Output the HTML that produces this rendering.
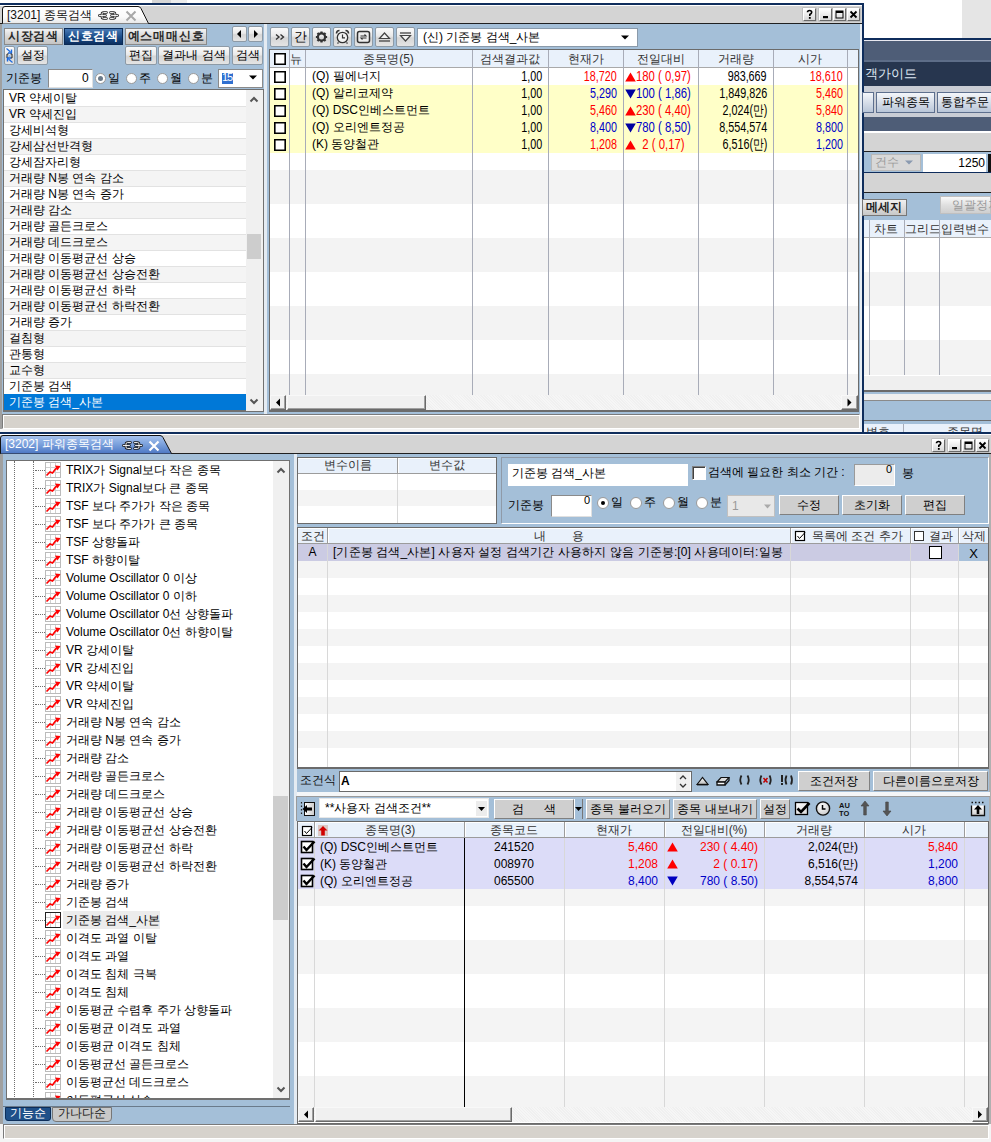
<!DOCTYPE html><html><head><meta charset='utf-8'><style>
*{margin:0;padding:0;box-sizing:border-box}
html,body{width:991px;height:1142px;overflow:hidden;background:#fff}
body{position:relative;font-family:"Liberation Sans",sans-serif;font-size:12px;color:#000}
body div{position:absolute}
.t{white-space:pre;font-size:12px}
.btn{background:linear-gradient(#fbfbfb,#e9e9e9 45%,#d6d6d6 55%,#e4e4e4);border:1px solid #8d9aa6;border-radius:2px}
.btn2{background:#cfcfcf;border:1px solid;border-color:#fff #808080 #808080 #fff}
.chk{background:#fff;border:1px solid #000}
</style></head><body>
<div style="left:152px;top:0px;width:19px;height:3px;background:#d6d6d6"></div>
<div style="left:171px;top:0px;width:16px;height:3px;background:#ececec"></div>
<div style="left:962px;top:0px;width:29px;height:38px;background:#e5e5e5"></div>
<div style="left:0px;top:3px;width:864px;height:2px;background:#0f2d5c"></div>
<div style="left:862px;top:3px;width:2px;height:429px;background:#0f2d5c"></div>
<div style="left:0px;top:5px;width:862px;height:1px;background:#fff"></div>
<div style="left:0px;top:6px;width:862px;height:18px;background:#d4d4d4"></div>
<div style="left:0px;top:23px;width:862px;height:1px;background:#202020"></div>
<svg style="position:absolute;left:0;top:5px" width="152" height="20"><defs><linearGradient id="tg1" x1="0" y1="0" x2="0" y2="1"><stop offset="0" stop-color="#ffffff"/><stop offset="0.6" stop-color="#fafafa"/><stop offset="1" stop-color="#e8e8e8"/></linearGradient></defs><path d="M2.5,18.5 L2.5,4 Q2.5,1.5 5,1.5 L138,1.5 Q140,1.5 141,3.5 L148.5,18.5" fill="url(#tg1)" stroke="#111" stroke-width="1"/></svg>
<div class="t" style="left:7px;top:6px;height:18px;line-height:18px;color:#111">[3201] 종목검색</div>
<svg style="position:absolute;left:98px;top:11px" width="21" height="10"><g fill="none" stroke="#222" stroke-width="2.6" stroke-linecap="round"><path d="M8.5 1.5 H5.5 Q4 1.5 4 3 V6 Q4 7.5 5.5 7.5 H8.5"/><path d="M1.2 4.5 H7.5"/><path d="M12.5 1.5 H15.5 Q17 1.5 17 3 V6 Q17 7.5 15.5 7.5 H12.5"/><path d="M13.5 4.5 H19.8"/></g><g fill="none" stroke="#fff" stroke-width="0.9" stroke-linecap="round"><path d="M8.5 1.5 H5.5 Q4 1.5 4 3 V6 Q4 7.5 5.5 7.5 H8.5"/><path d="M1.2 4.5 H7.5"/><path d="M12.5 1.5 H15.5 Q17 1.5 17 3 V6 Q17 7.5 15.5 7.5 H12.5"/><path d="M13.5 4.5 H19.8"/></g></svg>
<svg style="position:absolute;left:125px;top:10px" width="12" height="12"><path d="M1.5 1.5 L10.5 10.5 M10.5 1.5 L1.5 10.5" stroke="#a8a8a8" stroke-width="2"/></svg>
<div style="left:803px;top:8px;width:13px;height:13px;background:linear-gradient(#fff,#d8d8d8);border:1px solid;border-color:#fff #6a6a6a #6a6a6a #fff;box-shadow:0 0 0 0.5px #aaa"><svg width="13" height="13" style="position:absolute;left:-1px;top:-1px"><path d="M4.5 4.2 Q4.5 2.5 6.5 2.5 Q8.7 2.5 8.7 4.3 Q8.7 5.6 6.8 6.4 L6.8 8" stroke="#000" stroke-width="1.6" fill="none"/><rect x="5.9" y="9" width="1.8" height="1.8" fill="#000"/></svg></div>
<div style="left:819px;top:8px;width:13px;height:13px;background:linear-gradient(#fff,#d8d8d8);border:1px solid;border-color:#fff #6a6a6a #6a6a6a #fff;box-shadow:0 0 0 0.5px #aaa"><svg width="13" height="13" style="position:absolute;left:-1px;top:-1px"><rect x="4" y="8" width="5" height="2.2" fill="#000"/></svg></div>
<div style="left:833px;top:8px;width:13px;height:13px;background:linear-gradient(#fff,#d8d8d8);border:1px solid;border-color:#fff #6a6a6a #6a6a6a #fff;box-shadow:0 0 0 0.5px #aaa"><svg width="13" height="13" style="position:absolute;left:-1px;top:-1px"><rect x="3" y="3" width="7" height="7" fill="none" stroke="#000" stroke-width="1"/><rect x="3" y="3" width="7" height="2" fill="#000"/></svg></div>
<div style="left:847px;top:8px;width:13px;height:13px;background:linear-gradient(#fff,#d8d8d8);border:1px solid;border-color:#fff #6a6a6a #6a6a6a #fff;box-shadow:0 0 0 0.5px #aaa"><svg width="13" height="13" style="position:absolute;left:-1px;top:-1px"><path d="M3.5 3.5 L9.5 9.5 M9.5 3.5 L3.5 9.5" stroke="#000" stroke-width="1.8"/></svg></div>
<div style="left:0px;top:24px;width:2px;height:408px;background:#a0a0a0"></div>
<div style="left:2px;top:24px;width:858px;height:390px;background:#a4bfd8"></div>
<div style="left:860px;top:24px;width:2px;height:408px;background:#e8eef4"></div>
<div style="left:4px;top:28px;width:59px;height:17px;background:linear-gradient(#f4f4f4,#d8d8d8 50%,#c4c4c4);border:1px solid #8a8a8a;color:#2a2a2a;font-weight:bold;font-size:12px;line-height:15px;text-align:center;letter-spacing:0.8px">시장검색</div>
<div style="left:64px;top:28px;width:59px;height:17px;background:linear-gradient(#4a7ab5,#1c4f8c 50%,#0c2f60);border:1px solid #0a2a55;color:#fff;font-weight:bold;font-size:12px;line-height:15px;text-align:center;letter-spacing:0.8px">신호검색</div>
<div style="left:125px;top:28px;width:82px;height:17px;background:linear-gradient(#f4f4f4,#d8d8d8 50%,#c4c4c4);border:1px solid #8a8a8a;color:#2a2a2a;font-weight:bold;font-size:12px;line-height:15px;text-align:center;letter-spacing:0.8px">예스매매신호</div>
<div class="btn" style="left:232px;top:26px;width:15px;height:16px;"></div>
<div class="btn" style="left:248px;top:26px;width:15px;height:16px;"></div>
<svg style="position:absolute;left:232px;top:26px" width="15" height="16"><path d="M9 4 L5 8 L9 12 Z" fill="#000"/></svg>
<svg style="position:absolute;left:248px;top:26px" width="15" height="16"><path d="M6 4 L10 8 L6 12 Z" fill="#000"/></svg>
<div class="btn" style="left:4px;top:46px;width:11px;height:19px;"></div>
<svg style="position:absolute;left:4px;top:46px" width="11" height="19"><path d="M2.5 2.5 L6.5 6" stroke="#1a6ae0" stroke-width="1.2"/><path d="M7.5 3.5 V7 H4" fill="none" stroke="#1a6ae0" stroke-width="1.4"/><path d="M4.5 8 H3 V12 H4.5 M6.5 8 H8 V12 H6.5" fill="none" stroke="#222" stroke-width="1"/><path d="M4.5 10 H6.5" stroke="#4a9af0"/><path d="M8.5 16.5 L4.5 13" stroke="#1a6ae0" stroke-width="1.2"/><path d="M3.5 15.5 V12 H7" fill="none" stroke="#1a6ae0" stroke-width="1.4"/></svg>
<div class="btn" style="left:17px;top:46px;width:31px;height:19px;"></div>
<div class="t" style="left:17px;top:46px;height:19px;line-height:19px;width:31px;text-align:center;">설정</div>
<div class="btn" style="left:125px;top:46px;width:32px;height:19px;"></div>
<div class="t" style="left:125px;top:46px;height:19px;line-height:19px;width:32px;text-align:center;">편집</div>
<div class="btn" style="left:158px;top:46px;width:72px;height:19px;"></div>
<div class="t" style="left:158px;top:46px;height:19px;line-height:19px;width:72px;text-align:center;">결과내 검색</div>
<div class="btn" style="left:232px;top:46px;width:31px;height:19px;"></div>
<div class="t" style="left:232px;top:46px;height:19px;line-height:19px;width:31px;text-align:center;">검색</div>
<div class="t" style="left:6px;top:69px;height:18px;line-height:18px;">기준봉</div>
<div style="left:48px;top:69px;width:45px;height:19px;background:#fff;border:1px solid #8a8a8a;border-right-color:#e0e0e0;border-bottom-color:#e0e0e0"></div>
<div class="t" style="left:48px;top:69px;height:18px;line-height:18px;width:44px;text-align:right;">0 </div>
<div style="left:95px;top:73px;width:11px;height:11px;background:#fff;border:1px solid #9a9a9a;border-radius:50%"></div>
<div style="left:98px;top:76px;width:5px;height:5px;background:#6a7a8a;border-radius:50%"></div>
<div class="t" style="left:108px;top:69px;height:18px;line-height:18px;">일</div>
<div style="left:126px;top:73px;width:11px;height:11px;background:#fff;border:1px solid #9a9a9a;border-radius:50%"></div>
<div class="t" style="left:139px;top:69px;height:18px;line-height:18px;">주</div>
<div style="left:157px;top:73px;width:11px;height:11px;background:#fff;border:1px solid #9a9a9a;border-radius:50%"></div>
<div class="t" style="left:170px;top:69px;height:18px;line-height:18px;">월</div>
<div style="left:188px;top:73px;width:11px;height:11px;background:#fff;border:1px solid #9a9a9a;border-radius:50%"></div>
<div class="t" style="left:201px;top:69px;height:18px;line-height:18px;">분</div>
<div style="left:218px;top:69px;width:45px;height:19px;background:#fff;border:1px solid #8a8a8a"></div>
<div style="left:222px;top:73px;width:11px;height:11px;background:#3070d0"></div>
<div class="t" style="left:222px;top:71px;height:13px;line-height:13px;color:#fff;font-size:11px;letter-spacing:-1px">15</div>
<svg style="position:absolute;left:248px;top:75px" width="10" height="6"><path d="M1 0.5 L9 0.5 L5 4.5 Z" fill="#000"/></svg>
<div style="left:3px;top:89px;width:261px;height:323px;background:#fff;border:1px solid #707070;border-right-width:2px;border-bottom-width:2px"></div>
<div style="left:4px;top:90px;width:242px;height:16px;background:#ffffff"></div>
<div class="t" style="left:9px;top:90px;height:16px;line-height:16px;">VR 약세이탈</div>
<div style="left:4px;top:106px;width:242px;height:16px;background:#f4f4f4;border-top:1px solid #e2e2e2"></div>
<div class="t" style="left:9px;top:106px;height:16px;line-height:16px;">VR 약세진입</div>
<div style="left:4px;top:122px;width:242px;height:16px;background:#ffffff;border-top:1px solid #e2e2e2"></div>
<div class="t" style="left:9px;top:122px;height:16px;line-height:16px;">강세비석형</div>
<div style="left:4px;top:138px;width:242px;height:16px;background:#f4f4f4;border-top:1px solid #e2e2e2"></div>
<div class="t" style="left:9px;top:138px;height:16px;line-height:16px;">강세삼선반격형</div>
<div style="left:4px;top:154px;width:242px;height:16px;background:#ffffff;border-top:1px solid #e2e2e2"></div>
<div class="t" style="left:9px;top:154px;height:16px;line-height:16px;">강세잠자리형</div>
<div style="left:4px;top:170px;width:242px;height:16px;background:#f4f4f4;border-top:1px solid #e2e2e2"></div>
<div class="t" style="left:9px;top:170px;height:16px;line-height:16px;">거래량 N봉 연속 감소</div>
<div style="left:4px;top:186px;width:242px;height:16px;background:#ffffff;border-top:1px solid #e2e2e2"></div>
<div class="t" style="left:9px;top:186px;height:16px;line-height:16px;">거래량 N봉 연속 증가</div>
<div style="left:4px;top:202px;width:242px;height:16px;background:#f4f4f4;border-top:1px solid #e2e2e2"></div>
<div class="t" style="left:9px;top:202px;height:16px;line-height:16px;">거래량 감소</div>
<div style="left:4px;top:218px;width:242px;height:16px;background:#ffffff;border-top:1px solid #e2e2e2"></div>
<div class="t" style="left:9px;top:218px;height:16px;line-height:16px;">거래량 골든크로스</div>
<div style="left:4px;top:234px;width:242px;height:16px;background:#f4f4f4;border-top:1px solid #e2e2e2"></div>
<div class="t" style="left:9px;top:234px;height:16px;line-height:16px;">거래량 데드크로스</div>
<div style="left:4px;top:250px;width:242px;height:16px;background:#ffffff;border-top:1px solid #e2e2e2"></div>
<div class="t" style="left:9px;top:250px;height:16px;line-height:16px;">거래량 이동평균선 상승</div>
<div style="left:4px;top:266px;width:242px;height:16px;background:#f4f4f4;border-top:1px solid #e2e2e2"></div>
<div class="t" style="left:9px;top:266px;height:16px;line-height:16px;">거래량 이동평균선 상승전환</div>
<div style="left:4px;top:282px;width:242px;height:16px;background:#ffffff;border-top:1px solid #e2e2e2"></div>
<div class="t" style="left:9px;top:282px;height:16px;line-height:16px;">거래량 이동평균선 하락</div>
<div style="left:4px;top:298px;width:242px;height:16px;background:#f4f4f4;border-top:1px solid #e2e2e2"></div>
<div class="t" style="left:9px;top:298px;height:16px;line-height:16px;">거래량 이동평균선 하락전환</div>
<div style="left:4px;top:314px;width:242px;height:16px;background:#ffffff;border-top:1px solid #e2e2e2"></div>
<div class="t" style="left:9px;top:314px;height:16px;line-height:16px;">거래량 증가</div>
<div style="left:4px;top:330px;width:242px;height:16px;background:#f4f4f4;border-top:1px solid #e2e2e2"></div>
<div class="t" style="left:9px;top:330px;height:16px;line-height:16px;">걸침형</div>
<div style="left:4px;top:346px;width:242px;height:16px;background:#ffffff;border-top:1px solid #e2e2e2"></div>
<div class="t" style="left:9px;top:346px;height:16px;line-height:16px;">관통형</div>
<div style="left:4px;top:362px;width:242px;height:16px;background:#f4f4f4;border-top:1px solid #e2e2e2"></div>
<div class="t" style="left:9px;top:362px;height:16px;line-height:16px;">교수형</div>
<div style="left:4px;top:378px;width:242px;height:16px;background:#ffffff;border-top:1px solid #e2e2e2"></div>
<div class="t" style="left:9px;top:378px;height:16px;line-height:16px;">기준봉 검색</div>
<div style="left:4px;top:394px;width:242px;height:16px;background:#0078d7"></div>
<div class="t" style="left:9px;top:394px;height:16px;line-height:16px;color:#fff">기준봉 검색_사본</div>
<div style="left:246px;top:90px;width:17px;height:321px;background:#f0f0f0"></div>
<div style="left:247px;top:234px;width:14px;height:25px;background:#cdcdcd"></div>
<svg style="position:absolute;left:249px;top:95px" width="10" height="8"><path d="M1.5 6.5 L5 3 L8.5 6.5" stroke="#555" stroke-width="2" fill="none"/></svg>
<svg style="position:absolute;left:249px;top:398px" width="10" height="8"><path d="M1.5 1.5 L5 5 L8.5 1.5" stroke="#555" stroke-width="2" fill="none"/></svg>
<div style="left:264px;top:24px;width:3px;height:390px;background:#e4ebf2"></div>
<div class="btn" style="left:270px;top:27px;width:19px;height:20px;"></div>
<div class="btn" style="left:291px;top:27px;width:19px;height:20px;"></div>
<div class="btn" style="left:312px;top:27px;width:19px;height:20px;"></div>
<div class="btn" style="left:333px;top:27px;width:19px;height:20px;"></div>
<div class="btn" style="left:354px;top:27px;width:19px;height:20px;"></div>
<div class="btn" style="left:375px;top:27px;width:19px;height:20px;"></div>
<div class="btn" style="left:396px;top:27px;width:19px;height:20px;"></div>
<svg style="position:absolute;left:270px;top:27px" width="19" height="20"><path d="M6 7.5 L9 10 L6 12.5 M10.5 7.5 L13.5 10 L10.5 12.5" stroke="#333" stroke-width="1.4" fill="none"/></svg>
<div class="t" style="left:294px;top:27px;height:20px;line-height:20px;font-size:13px">간</div>
<svg style="position:absolute;left:312px;top:27px" width="19" height="20"><g transform="translate(9.5,10)"><circle r="3.6" fill="none" stroke="#333" stroke-width="2.2"/><g stroke="#333" stroke-width="2.2"><path d="M0 -5.6 V-3.5 M0 5.6 V3.5 M-5.6 0 H-3.5 M5.6 0 H3.5 M-4 -4 L-2.6 -2.6 M4 4 L2.6 2.6 M-4 4 L-2.6 2.6 M4 -4 L2.6 -2.6"/></g></g></svg>
<svg style="position:absolute;left:333px;top:27px" width="19" height="20"><circle cx="9.5" cy="10.5" r="5.2" fill="#f4f4f4" stroke="#333" stroke-width="1.3"/><path d="M9.5 7.5 V10.8 H12" stroke="#333" stroke-width="1.2" fill="none"/><path d="M3.5 6.5 Q3.5 3.5 6.5 3.5" stroke="#333" stroke-width="1.6" fill="none"/><path d="M15.5 6.5 Q15.5 3.5 12.5 3.5" stroke="#333" stroke-width="1.6" fill="none"/><path d="M5.5 15.5 L4.5 16.5 M13.5 15.5 L14.5 16.5" stroke="#333" stroke-width="1.2"/></svg>
<svg style="position:absolute;left:354px;top:27px" width="19" height="20"><rect x="3.5" y="4.5" width="12" height="11" rx="2" fill="#eee" stroke="#333" stroke-width="1.5"/><path d="M6.5 9 H12 L10.5 7.5 M12.5 11 H7 L8.5 12.5" stroke="#333" stroke-width="1.1" fill="none"/></svg>
<svg style="position:absolute;left:375px;top:27px" width="19" height="20"><path d="M4.5 11.5 L9.5 6 L14.5 11.5 Z" fill="#f4f4f4" stroke="#444" stroke-width="1.2"/><path d="M4 14 H15" stroke="#444" stroke-width="1.3"/></svg>
<svg style="position:absolute;left:396px;top:27px" width="19" height="20"><path d="M4 6 H15" stroke="#444" stroke-width="1.3"/><path d="M4.5 8.5 L9.5 14 L14.5 8.5 Z" fill="#f4f4f4" stroke="#444" stroke-width="1.2"/></svg>
<div style="left:417px;top:28px;width:221px;height:19px;background:#fff;border:1px solid #8a9aaa"></div>
<div class="t" style="left:423px;top:28px;height:18px;line-height:18px;">(신) 기준봉 검색_사본</div>
<svg style="position:absolute;left:620px;top:35px" width="10" height="6"><path d="M1 0.5 L9 0.5 L5 4.5 Z" fill="#000"/></svg>
<div style="left:269px;top:49px;width:590px;height:363px;background:#fff;border:1px solid #6b6b6b;border-bottom-width:2px"></div>
<div style="left:270px;top:50px;width:588px;height:18px;background:#e9f1fb;border-bottom:1px solid #a9a9a9"></div>
<div style="left:270px;top:68px;width:588px;height:17px;background:#ffffff"></div>
<div style="left:270px;top:85px;width:588px;height:17px;background:#ffffc8"></div>
<div style="left:270px;top:102px;width:588px;height:17px;background:#ffffc8"></div>
<div style="left:270px;top:119px;width:588px;height:17px;background:#ffffc8"></div>
<div style="left:270px;top:136px;width:588px;height:17px;background:#ffffc8"></div>
<div style="left:270px;top:153px;width:588px;height:17px;background:#ffffff"></div>
<div style="left:270px;top:170px;width:588px;height:17px;background:#f3f3f3"></div>
<div style="left:270px;top:187px;width:588px;height:17px;background:#f3f3f3"></div>
<div style="left:270px;top:204px;width:588px;height:17px;background:#ffffff"></div>
<div style="left:270px;top:221px;width:588px;height:17px;background:#ffffff"></div>
<div style="left:270px;top:238px;width:588px;height:17px;background:#f3f3f3"></div>
<div style="left:270px;top:255px;width:588px;height:17px;background:#f3f3f3"></div>
<div style="left:270px;top:272px;width:588px;height:17px;background:#ffffff"></div>
<div style="left:270px;top:289px;width:588px;height:17px;background:#ffffff"></div>
<div style="left:270px;top:306px;width:588px;height:17px;background:#f3f3f3"></div>
<div style="left:270px;top:323px;width:588px;height:17px;background:#f3f3f3"></div>
<div style="left:270px;top:340px;width:588px;height:17px;background:#ffffff"></div>
<div style="left:270px;top:357px;width:588px;height:17px;background:#ffffff"></div>
<div style="left:270px;top:374px;width:588px;height:17px;background:#f3f3f3"></div>
<div style="left:270px;top:391px;width:588px;height:4px;background:#f3f3f3"></div>
<div style="left:289px;top:50px;width:1px;height:345px;background:#a8acb8"></div>
<div style="left:305px;top:50px;width:1px;height:345px;background:#a8acb8"></div>
<div style="left:472px;top:50px;width:1px;height:345px;background:#a8acb8"></div>
<div style="left:548px;top:50px;width:1px;height:345px;background:#a8acb8"></div>
<div style="left:623px;top:50px;width:1px;height:345px;background:#a8acb8"></div>
<div style="left:698px;top:50px;width:1px;height:345px;background:#a8acb8"></div>
<div style="left:773px;top:50px;width:1px;height:345px;background:#a8acb8"></div>
<div style="left:847px;top:50px;width:1px;height:345px;background:#a8acb8"></div>
<div style="left:274px;top:53px;width:12px;height:12px;background:#fff;border:1px solid #000;box-shadow:inset 0 0 0 0.6px #000"></div>
<div class="t" style="left:290px;top:50px;height:18px;line-height:18px;color:#333">뉴</div>
<div class="t" style="left:305px;top:50px;height:18px;line-height:18px;width:167px;text-align:center;color:#333">종목명(5)</div>
<div class="t" style="left:472px;top:50px;height:18px;line-height:18px;width:76px;text-align:center;color:#333">검색결과값</div>
<div class="t" style="left:548px;top:50px;height:18px;line-height:18px;width:75px;text-align:center;color:#333">현재가</div>
<div class="t" style="left:623px;top:50px;height:18px;line-height:18px;width:75px;text-align:center;color:#333">전일대비</div>
<div class="t" style="left:698px;top:50px;height:18px;line-height:18px;width:75px;text-align:center;color:#333">거래량</div>
<div class="t" style="left:773px;top:50px;height:18px;line-height:18px;width:74px;text-align:center;color:#333">시가</div>
<div style="left:274px;top:71px;width:12px;height:12px;background:#fff;border:1px solid #000;box-shadow:inset 0 0 0 0.6px #000"></div>
<div class="t" style="left:312px;top:68px;height:17px;line-height:17px;">(Q) 필에너지</div>
<div class="t" style="left:392px;top:68px;width:150px;height:17px;line-height:17px;text-align:right;color:#000"><span style="display:inline-block;font-size:14px;transform:scaleX(0.77);transform-origin:100% 50%">1,00</span></div>
<div class="t" style="left:467px;top:68px;width:150px;height:17px;line-height:17px;text-align:right;color:#ff0000"><span style="display:inline-block;font-size:14px;transform:scaleX(0.77);transform-origin:100% 50%">18,720</span></div>
<svg style="position:absolute;left:625px;top:72px" width="11" height="10"><path d="M5.5 0.5 L10.8 9.5 L0.2 9.5 Z" fill="#ff0000"/></svg>
<div class="t" style="left:636px;top:68px;height:17px;line-height:17px;color:#ff0000"><span style="display:inline-block;font-size:14px;transform:scaleX(0.81);transform-origin:0 50%">180 ( 0,97)</span></div>
<div class="t" style="left:617px;top:68px;width:150px;height:17px;line-height:17px;text-align:right;color:#000"><span style="display:inline-block;font-size:14px;transform:scaleX(0.77);transform-origin:100% 50%">983,669</span></div>
<div class="t" style="left:693px;top:68px;width:150px;height:17px;line-height:17px;text-align:right;color:#ff0000"><span style="display:inline-block;font-size:14px;transform:scaleX(0.77);transform-origin:100% 50%">18,610</span></div>
<div style="left:274px;top:88px;width:12px;height:12px;background:#fff;border:1px solid #000;box-shadow:inset 0 0 0 0.6px #000"></div>
<div class="t" style="left:312px;top:85px;height:17px;line-height:17px;">(Q) 알리코제약</div>
<div class="t" style="left:392px;top:85px;width:150px;height:17px;line-height:17px;text-align:right;color:#000"><span style="display:inline-block;font-size:14px;transform:scaleX(0.77);transform-origin:100% 50%">1,00</span></div>
<div class="t" style="left:467px;top:85px;width:150px;height:17px;line-height:17px;text-align:right;color:#0000c8"><span style="display:inline-block;font-size:14px;transform:scaleX(0.77);transform-origin:100% 50%">5,290</span></div>
<svg style="position:absolute;left:625px;top:89px" width="11" height="10"><path d="M0.2 0.5 L10.8 0.5 L5.5 9.5 Z" fill="#0000a0"/></svg>
<div class="t" style="left:636px;top:85px;height:17px;line-height:17px;color:#0000c8"><span style="display:inline-block;font-size:14px;transform:scaleX(0.81);transform-origin:0 50%">100 ( 1,86)</span></div>
<div class="t" style="left:617px;top:85px;width:150px;height:17px;line-height:17px;text-align:right;color:#000"><span style="display:inline-block;font-size:14px;transform:scaleX(0.77);transform-origin:100% 50%">1,849,826</span></div>
<div class="t" style="left:693px;top:85px;width:150px;height:17px;line-height:17px;text-align:right;color:#ff0000"><span style="display:inline-block;font-size:14px;transform:scaleX(0.77);transform-origin:100% 50%">5,460</span></div>
<div style="left:274px;top:105px;width:12px;height:12px;background:#fff;border:1px solid #000;box-shadow:inset 0 0 0 0.6px #000"></div>
<div class="t" style="left:312px;top:102px;height:17px;line-height:17px;">(Q) DSC인베스트먼트</div>
<div class="t" style="left:392px;top:102px;width:150px;height:17px;line-height:17px;text-align:right;color:#000"><span style="display:inline-block;font-size:14px;transform:scaleX(0.77);transform-origin:100% 50%">1,00</span></div>
<div class="t" style="left:467px;top:102px;width:150px;height:17px;line-height:17px;text-align:right;color:#ff0000"><span style="display:inline-block;font-size:14px;transform:scaleX(0.77);transform-origin:100% 50%">5,460</span></div>
<svg style="position:absolute;left:625px;top:106px" width="11" height="10"><path d="M5.5 0.5 L10.8 9.5 L0.2 9.5 Z" fill="#ff0000"/></svg>
<div class="t" style="left:636px;top:102px;height:17px;line-height:17px;color:#ff0000"><span style="display:inline-block;font-size:14px;transform:scaleX(0.81);transform-origin:0 50%">230 ( 4,40)</span></div>
<div class="t" style="left:617px;top:102px;width:150px;height:17px;line-height:17px;text-align:right;color:#000"><span style="display:inline-block;font-size:14px;transform:scaleX(0.77);transform-origin:100% 50%">2,024(만)</span></div>
<div class="t" style="left:693px;top:102px;width:150px;height:17px;line-height:17px;text-align:right;color:#ff0000"><span style="display:inline-block;font-size:14px;transform:scaleX(0.77);transform-origin:100% 50%">5,840</span></div>
<div style="left:274px;top:122px;width:12px;height:12px;background:#fff;border:1px solid #000;box-shadow:inset 0 0 0 0.6px #000"></div>
<div class="t" style="left:312px;top:119px;height:17px;line-height:17px;">(Q) 오리엔트정공</div>
<div class="t" style="left:392px;top:119px;width:150px;height:17px;line-height:17px;text-align:right;color:#000"><span style="display:inline-block;font-size:14px;transform:scaleX(0.77);transform-origin:100% 50%">1,00</span></div>
<div class="t" style="left:467px;top:119px;width:150px;height:17px;line-height:17px;text-align:right;color:#0000c8"><span style="display:inline-block;font-size:14px;transform:scaleX(0.77);transform-origin:100% 50%">8,400</span></div>
<svg style="position:absolute;left:625px;top:123px" width="11" height="10"><path d="M0.2 0.5 L10.8 0.5 L5.5 9.5 Z" fill="#0000a0"/></svg>
<div class="t" style="left:636px;top:119px;height:17px;line-height:17px;color:#0000c8"><span style="display:inline-block;font-size:14px;transform:scaleX(0.81);transform-origin:0 50%">780 ( 8,50)</span></div>
<div class="t" style="left:617px;top:119px;width:150px;height:17px;line-height:17px;text-align:right;color:#000"><span style="display:inline-block;font-size:14px;transform:scaleX(0.77);transform-origin:100% 50%">8,554,574</span></div>
<div class="t" style="left:693px;top:119px;width:150px;height:17px;line-height:17px;text-align:right;color:#0000c8"><span style="display:inline-block;font-size:14px;transform:scaleX(0.77);transform-origin:100% 50%">8,800</span></div>
<div style="left:274px;top:139px;width:12px;height:12px;background:#fff;border:1px solid #000;box-shadow:inset 0 0 0 0.6px #000"></div>
<div class="t" style="left:312px;top:136px;height:17px;line-height:17px;">(K) 동양철관</div>
<div class="t" style="left:392px;top:136px;width:150px;height:17px;line-height:17px;text-align:right;color:#000"><span style="display:inline-block;font-size:14px;transform:scaleX(0.77);transform-origin:100% 50%">1,00</span></div>
<div class="t" style="left:467px;top:136px;width:150px;height:17px;line-height:17px;text-align:right;color:#ff0000"><span style="display:inline-block;font-size:14px;transform:scaleX(0.77);transform-origin:100% 50%">1,208</span></div>
<svg style="position:absolute;left:625px;top:140px" width="11" height="10"><path d="M5.5 0.5 L10.8 9.5 L0.2 9.5 Z" fill="#ff0000"/></svg>
<div class="t" style="left:636px;top:136px;height:17px;line-height:17px;color:#ff0000"><span style="display:inline-block;font-size:14px;transform:scaleX(0.81);transform-origin:0 50%">  2 ( 0,17)</span></div>
<div class="t" style="left:617px;top:136px;width:150px;height:17px;line-height:17px;text-align:right;color:#000"><span style="display:inline-block;font-size:14px;transform:scaleX(0.77);transform-origin:100% 50%">6,516(만)</span></div>
<div class="t" style="left:693px;top:136px;width:150px;height:17px;line-height:17px;text-align:right;color:#0000c8"><span style="display:inline-block;font-size:14px;transform:scaleX(0.77);transform-origin:100% 50%">1,200</span></div>
<div style="left:270px;top:395px;width:588px;height:15px;background:repeating-linear-gradient(45deg,#f6f6f6 0 1px,#f0f0f0 1px 2px)"></div>
<div style="left:270px;top:395px;width:16px;height:15px;background:#f0f0f0;border:1px solid;border-color:#f8f8f8 #6a6a6a #6a6a6a #f8f8f8;box-shadow:inset -1px -1px 0 #a0a0a0"></div>
<svg style="position:absolute;left:270px;top:395px" width="16" height="15"><path d="M10.0 3.5 L6.0 7.5 L10.0 11.5 Z" fill="#000"/></svg>
<div style="left:287px;top:395px;width:139px;height:15px;background:#f0f0f0;border:1px solid;border-color:#f8f8f8 #6a6a6a #6a6a6a #f8f8f8;box-shadow:inset -1px -1px 0 #a0a0a0"></div>
<div style="left:841px;top:395px;width:17px;height:15px;background:#f0f0f0;border:1px solid;border-color:#f8f8f8 #6a6a6a #6a6a6a #f8f8f8;box-shadow:inset -1px -1px 0 #a0a0a0"></div>
<svg style="position:absolute;left:841px;top:395px" width="17" height="15"><path d="M6.5 3.5 L10.5 7.5 L6.5 11.5 Z" fill="#000"/></svg>
<div style="left:0px;top:429px;width:862px;height:3px;background:#f4f4f4"></div>
<div style="left:2px;top:414px;width:858px;height:15px;background:#d6d2cc;border:1px solid #7a7a7a;border-right-color:#fff;border-bottom-color:#fff;box-shadow:inset 1px 1px 0 #fff"></div>
<div style="left:864px;top:38px;width:127px;height:2px;background:#0f2d5c"></div>
<div style="left:864px;top:40px;width:127px;height:1px;background:#e8e8f0"></div>
<div style="left:864px;top:41px;width:127px;height:21px;background:#4e5d77"></div>
<div style="left:864px;top:60px;width:127px;height:2px;background:#5d6d88"></div>
<div style="left:864px;top:62px;width:127px;height:24px;background:#27364f"></div>
<div class="t" style="left:865px;top:65px;height:18px;line-height:18px;color:#dfe8f4;font-size:13px">객가이드</div>
<div style="left:864px;top:86px;width:127px;height:31px;background:#c9cdd5"></div>
<div style="left:862px;top:92px;width:12px;height:21px;background:linear-gradient(#f4f6fa,#b9c6d8);border:1px solid #5d6f8e"></div>
<div style="left:876px;top:92px;width:59px;height:21px;background:linear-gradient(#f4f6fa,#b9c6d8);border:1px solid #5d6f8e"></div>
<div class="t" style="left:876px;top:92px;height:21px;line-height:21px;width:59px;text-align:center;">파워종목</div>
<div style="left:937px;top:92px;width:60px;height:21px;background:linear-gradient(#f4f6fa,#b9c6d8);border:1px solid #5d6f8e"></div>
<div class="t" style="left:941px;top:92px;height:21px;line-height:21px;">통합주문</div>
<div style="left:864px;top:117px;width:127px;height:14px;background:#4e5d77"></div>
<div style="left:864px;top:131px;width:127px;height:2px;background:#fff"></div>
<div style="left:864px;top:133px;width:127px;height:18px;background:#d4d4d4"></div>
<div style="left:864px;top:151px;width:127px;height:1px;background:#222"></div>
<div style="left:864px;top:152px;width:127px;height:20px;background:#a4bfd8"></div>
<div style="left:871px;top:154px;width:50px;height:17px;background:#d8d8d8;border:1px solid #b8b8b8"></div>
<div class="t" style="left:875px;top:154px;height:17px;line-height:17px;color:#9a9a9a">건수</div>
<svg style="position:absolute;left:904px;top:160px" width="10" height="6"><path d="M1 0.5 L9 0.5 L5 4.5 Z" fill="#8a9ab0"/></svg>
<div style="left:923px;top:154px;width:63px;height:18px;background:#fff"></div>
<div class="t" style="left:923px;top:154px;height:18px;line-height:18px;width:62px;text-align:right;">1250</div>
<div style="left:988px;top:154px;width:3px;height:18px;background:#111"></div>
<div style="left:864px;top:172px;width:127px;height:1px;background:#0f2d5c"></div>
<div style="left:864px;top:173px;width:127px;height:19px;background:#d4d4d4"></div>
<div style="left:864px;top:192px;width:127px;height:1px;background:#222"></div>
<div style="left:864px;top:193px;width:127px;height:28px;background:#a4bfd8"></div>
<div style="left:862px;top:199px;width:45px;height:17px;background:linear-gradient(#f0f0f0,#c8c8c8);border:1px solid #777"></div>
<div class="t" style="left:866px;top:199px;height:17px;line-height:17px;font-weight:bold;color:#222">메세지</div>
<div style="left:940px;top:196px;width:51px;height:18px;background:linear-gradient(#fafafa,#e0e0e0 50%,#cfcfcf);border:1px solid #c0c0c0"></div>
<div class="t" style="left:952px;top:196px;height:18px;line-height:18px;color:#999">일괄정지</div>
<div style="left:864px;top:220px;width:127px;height:18px;background:#e9f1fb;border-bottom:1px solid #a9a9a9"></div>
<div class="t" style="left:874px;top:220px;height:18px;line-height:18px;color:#333">차트</div>
<div class="t" style="left:905px;top:220px;height:18px;line-height:18px;color:#333">그리드</div>
<div class="t" style="left:941px;top:220px;height:18px;line-height:18px;color:#333">입력변수</div>
<div style="left:864px;top:238px;width:127px;height:34px;background:#fff"></div>
<div style="left:864px;top:272px;width:127px;height:34px;background:#f3f3f3"></div>
<div style="left:864px;top:306px;width:127px;height:34px;background:#fff"></div>
<div style="left:864px;top:340px;width:127px;height:35px;background:#f3f3f3"></div>
<div style="left:869px;top:220px;width:1px;height:155px;background:#a8acb8"></div>
<div style="left:904px;top:220px;width:1px;height:155px;background:#a8acb8"></div>
<div style="left:939px;top:220px;width:1px;height:155px;background:#a8acb8"></div>
<div style="left:864px;top:375px;width:127px;height:1px;background:#fff"></div>
<div style="left:864px;top:376px;width:127px;height:14px;background:#efefef"></div>
<div style="left:864px;top:390px;width:127px;height:2px;background:#6a6a6a"></div>
<div style="left:864px;top:392px;width:127px;height:2px;background:#a4bfd8"></div>
<div style="left:864px;top:394px;width:127px;height:6px;background:#efefef"></div>
<div style="left:864px;top:400px;width:127px;height:1px;background:#8a8a8a"></div>
<div style="left:864px;top:401px;width:127px;height:19px;background:#a4bfd8"></div>
<div style="left:864px;top:420px;width:127px;height:1px;background:#6a6a6a"></div>
<div style="left:864px;top:421px;width:127px;height:3px;background:#a4bfd8"></div>
<div style="left:864px;top:424px;width:127px;height:8px;background:#e9f1fb"></div>
<div style="left:903px;top:424px;width:1px;height:8px;background:#a8acb8"></div>
<div class="t" style="left:866px;top:424px;height:16px;line-height:16px;color:#333">변호</div>
<div class="t" style="left:947px;top:424px;height:16px;line-height:16px;color:#333">종목명</div>
<div style="left:0px;top:432px;width:991px;height:2px;background:#0f2d5c"></div>
<div style="left:0px;top:434px;width:991px;height:1px;background:#fff"></div>
<div style="left:0px;top:435px;width:991px;height:18px;background:#d4d4d4"></div>
<div style="left:0px;top:453px;width:991px;height:1px;background:#202020"></div>
<svg style="position:absolute;left:0;top:434px" width="180" height="21"><defs><linearGradient id="tg2" x1="0" y1="0" x2="0" y2="1"><stop offset="0" stop-color="#a8c4ee"/><stop offset="0.5" stop-color="#7aa0dc"/><stop offset="1" stop-color="#4d78c4"/></linearGradient></defs><path d="M0.5,19.5 L0.5,4 Q0.5,1.5 3,1.5 L160,1.5 Q162,1.5 163,3.5 L171.5,19.5" fill="url(#tg2)" stroke="#111" stroke-width="1"/></svg>
<div class="t" style="left:5px;top:435px;height:18px;line-height:18px;color:#fff">[3202] 파워종목검색</div>
<svg style="position:absolute;left:122px;top:441px" width="21" height="10"><g fill="none" stroke="#1a1a1a" stroke-width="2.6" stroke-linecap="round"><path d="M8.5 1.5 H5.5 Q4 1.5 4 3 V6 Q4 7.5 5.5 7.5 H8.5"/><path d="M1.2 4.5 H7.5"/><path d="M12.5 1.5 H15.5 Q17 1.5 17 3 V6 Q17 7.5 15.5 7.5 H12.5"/><path d="M13.5 4.5 H19.8"/></g><g fill="none" stroke="#fff" stroke-width="0.9" stroke-linecap="round"><path d="M8.5 1.5 H5.5 Q4 1.5 4 3 V6 Q4 7.5 5.5 7.5 H8.5"/><path d="M1.2 4.5 H7.5"/><path d="M12.5 1.5 H15.5 Q17 1.5 17 3 V6 Q17 7.5 15.5 7.5 H12.5"/><path d="M13.5 4.5 H19.8"/></g></svg>
<svg style="position:absolute;left:148px;top:440px" width="12" height="12"><path d="M1.5 1.5 L10.5 10.5 M10.5 1.5 L1.5 10.5" stroke="#fff" stroke-width="2.2"/></svg>
<div style="left:932px;top:439px;width:13px;height:13px;background:linear-gradient(#fff,#d8d8d8);border:1px solid;border-color:#fff #6a6a6a #6a6a6a #fff;box-shadow:0 0 0 0.5px #aaa"><svg width="13" height="13" style="position:absolute;left:-1px;top:-1px"><path d="M4.5 4.2 Q4.5 2.5 6.5 2.5 Q8.7 2.5 8.7 4.3 Q8.7 5.6 6.8 6.4 L6.8 8" stroke="#000" stroke-width="1.6" fill="none"/><rect x="5.9" y="9" width="1.8" height="1.8" fill="#000"/></svg></div>
<div style="left:948px;top:439px;width:13px;height:13px;background:linear-gradient(#fff,#d8d8d8);border:1px solid;border-color:#fff #6a6a6a #6a6a6a #fff;box-shadow:0 0 0 0.5px #aaa"><svg width="13" height="13" style="position:absolute;left:-1px;top:-1px"><rect x="4" y="8" width="5" height="2.2" fill="#000"/></svg></div>
<div style="left:962px;top:439px;width:13px;height:13px;background:linear-gradient(#fff,#d8d8d8);border:1px solid;border-color:#fff #6a6a6a #6a6a6a #fff;box-shadow:0 0 0 0.5px #aaa"><svg width="13" height="13" style="position:absolute;left:-1px;top:-1px"><rect x="3" y="3" width="7" height="7" fill="none" stroke="#000" stroke-width="1"/><rect x="3" y="3" width="7" height="2" fill="#000"/></svg></div>
<div style="left:976px;top:439px;width:13px;height:13px;background:linear-gradient(#fff,#d8d8d8);border:1px solid;border-color:#fff #6a6a6a #6a6a6a #fff;box-shadow:0 0 0 0.5px #aaa"><svg width="13" height="13" style="position:absolute;left:-1px;top:-1px"><path d="M3.5 3.5 L9.5 9.5 M9.5 3.5 L3.5 9.5" stroke="#000" stroke-width="1.8"/></svg></div>
<div style="left:0px;top:454px;width:3px;height:688px;background:#a0a0a0"></div>
<div style="left:3px;top:454px;width:986px;height:670px;background:#a4bfd8"></div>
<div style="left:989px;top:454px;width:2px;height:688px;background:#b0b0b0"></div>
<div style="left:6px;top:460px;width:284px;height:640px;background:#fff;border:1px solid #707070"></div>
<div style="left:14px;top:461px;width:1px;height:638px;border-left:1px dotted #707070"></div>
<div style="left:33px;top:461px;width:1px;height:638px;border-left:1px dotted #707070"></div>
<div style="left:35px;top:470px;width:10px;height:1px;border-top:1px dotted #707070"></div>
<div style="left:45px;top:462px;width:16px;height:16px;"><svg width="16" height="16" style="position:absolute;left:0;top:0"><rect x="0.5" y="0.5" width="15" height="15" fill="#fff" stroke="#bbb"/><path d="M5.5 1V15M10.5 1V15M1 5.5H15M1 10.5H15" stroke="#d0d0d0"/><path d="M1.5 13.5 L5 10 L7.5 11 L10.5 7 L12 6.5" stroke="#f00" stroke-width="1.6" fill="none"/><path d="M10 3.5 L15.5 4 L12.5 8.5 Z" fill="#f00"/></svg></div>
<div class="t" style="left:66px;top:461px;height:18px;line-height:18px;">TRIX가 Signal보다 작은 종목</div>
<div style="left:35px;top:488px;width:10px;height:1px;border-top:1px dotted #707070"></div>
<div style="left:45px;top:480px;width:16px;height:16px;"><svg width="16" height="16" style="position:absolute;left:0;top:0"><rect x="0.5" y="0.5" width="15" height="15" fill="#fff" stroke="#bbb"/><path d="M5.5 1V15M10.5 1V15M1 5.5H15M1 10.5H15" stroke="#d0d0d0"/><path d="M1.5 13.5 L5 10 L7.5 11 L10.5 7 L12 6.5" stroke="#f00" stroke-width="1.6" fill="none"/><path d="M10 3.5 L15.5 4 L12.5 8.5 Z" fill="#f00"/></svg></div>
<div class="t" style="left:66px;top:479px;height:18px;line-height:18px;">TRIX가 Signal보다 큰 종목</div>
<div style="left:35px;top:506px;width:10px;height:1px;border-top:1px dotted #707070"></div>
<div style="left:45px;top:498px;width:16px;height:16px;"><svg width="16" height="16" style="position:absolute;left:0;top:0"><rect x="0.5" y="0.5" width="15" height="15" fill="#fff" stroke="#bbb"/><path d="M5.5 1V15M10.5 1V15M1 5.5H15M1 10.5H15" stroke="#d0d0d0"/><path d="M1.5 13.5 L5 10 L7.5 11 L10.5 7 L12 6.5" stroke="#f00" stroke-width="1.6" fill="none"/><path d="M10 3.5 L15.5 4 L12.5 8.5 Z" fill="#f00"/></svg></div>
<div class="t" style="left:66px;top:497px;height:18px;line-height:18px;">TSF 보다 주가가 작은 종목</div>
<div style="left:35px;top:524px;width:10px;height:1px;border-top:1px dotted #707070"></div>
<div style="left:45px;top:516px;width:16px;height:16px;"><svg width="16" height="16" style="position:absolute;left:0;top:0"><rect x="0.5" y="0.5" width="15" height="15" fill="#fff" stroke="#bbb"/><path d="M5.5 1V15M10.5 1V15M1 5.5H15M1 10.5H15" stroke="#d0d0d0"/><path d="M1.5 13.5 L5 10 L7.5 11 L10.5 7 L12 6.5" stroke="#f00" stroke-width="1.6" fill="none"/><path d="M10 3.5 L15.5 4 L12.5 8.5 Z" fill="#f00"/></svg></div>
<div class="t" style="left:66px;top:515px;height:18px;line-height:18px;">TSF 보다 주가가 큰 종목</div>
<div style="left:35px;top:542px;width:10px;height:1px;border-top:1px dotted #707070"></div>
<div style="left:45px;top:534px;width:16px;height:16px;"><svg width="16" height="16" style="position:absolute;left:0;top:0"><rect x="0.5" y="0.5" width="15" height="15" fill="#fff" stroke="#bbb"/><path d="M5.5 1V15M10.5 1V15M1 5.5H15M1 10.5H15" stroke="#d0d0d0"/><path d="M1.5 13.5 L5 10 L7.5 11 L10.5 7 L12 6.5" stroke="#f00" stroke-width="1.6" fill="none"/><path d="M10 3.5 L15.5 4 L12.5 8.5 Z" fill="#f00"/></svg></div>
<div class="t" style="left:66px;top:533px;height:18px;line-height:18px;">TSF 상향돌파</div>
<div style="left:35px;top:560px;width:10px;height:1px;border-top:1px dotted #707070"></div>
<div style="left:45px;top:552px;width:16px;height:16px;"><svg width="16" height="16" style="position:absolute;left:0;top:0"><rect x="0.5" y="0.5" width="15" height="15" fill="#fff" stroke="#bbb"/><path d="M5.5 1V15M10.5 1V15M1 5.5H15M1 10.5H15" stroke="#d0d0d0"/><path d="M1.5 13.5 L5 10 L7.5 11 L10.5 7 L12 6.5" stroke="#f00" stroke-width="1.6" fill="none"/><path d="M10 3.5 L15.5 4 L12.5 8.5 Z" fill="#f00"/></svg></div>
<div class="t" style="left:66px;top:551px;height:18px;line-height:18px;">TSF 하향이탈</div>
<div style="left:35px;top:578px;width:10px;height:1px;border-top:1px dotted #707070"></div>
<div style="left:45px;top:570px;width:16px;height:16px;"><svg width="16" height="16" style="position:absolute;left:0;top:0"><rect x="0.5" y="0.5" width="15" height="15" fill="#fff" stroke="#bbb"/><path d="M5.5 1V15M10.5 1V15M1 5.5H15M1 10.5H15" stroke="#d0d0d0"/><path d="M1.5 13.5 L5 10 L7.5 11 L10.5 7 L12 6.5" stroke="#f00" stroke-width="1.6" fill="none"/><path d="M10 3.5 L15.5 4 L12.5 8.5 Z" fill="#f00"/></svg></div>
<div class="t" style="left:66px;top:569px;height:18px;line-height:18px;">Volume Oscillator 0 이상</div>
<div style="left:35px;top:596px;width:10px;height:1px;border-top:1px dotted #707070"></div>
<div style="left:45px;top:588px;width:16px;height:16px;"><svg width="16" height="16" style="position:absolute;left:0;top:0"><rect x="0.5" y="0.5" width="15" height="15" fill="#fff" stroke="#bbb"/><path d="M5.5 1V15M10.5 1V15M1 5.5H15M1 10.5H15" stroke="#d0d0d0"/><path d="M1.5 13.5 L5 10 L7.5 11 L10.5 7 L12 6.5" stroke="#f00" stroke-width="1.6" fill="none"/><path d="M10 3.5 L15.5 4 L12.5 8.5 Z" fill="#f00"/></svg></div>
<div class="t" style="left:66px;top:587px;height:18px;line-height:18px;">Volume Oscillator 0 이하</div>
<div style="left:35px;top:614px;width:10px;height:1px;border-top:1px dotted #707070"></div>
<div style="left:45px;top:606px;width:16px;height:16px;"><svg width="16" height="16" style="position:absolute;left:0;top:0"><rect x="0.5" y="0.5" width="15" height="15" fill="#fff" stroke="#bbb"/><path d="M5.5 1V15M10.5 1V15M1 5.5H15M1 10.5H15" stroke="#d0d0d0"/><path d="M1.5 13.5 L5 10 L7.5 11 L10.5 7 L12 6.5" stroke="#f00" stroke-width="1.6" fill="none"/><path d="M10 3.5 L15.5 4 L12.5 8.5 Z" fill="#f00"/></svg></div>
<div class="t" style="left:66px;top:605px;height:18px;line-height:18px;">Volume Oscillator 0선 상향돌파</div>
<div style="left:35px;top:632px;width:10px;height:1px;border-top:1px dotted #707070"></div>
<div style="left:45px;top:624px;width:16px;height:16px;"><svg width="16" height="16" style="position:absolute;left:0;top:0"><rect x="0.5" y="0.5" width="15" height="15" fill="#fff" stroke="#bbb"/><path d="M5.5 1V15M10.5 1V15M1 5.5H15M1 10.5H15" stroke="#d0d0d0"/><path d="M1.5 13.5 L5 10 L7.5 11 L10.5 7 L12 6.5" stroke="#f00" stroke-width="1.6" fill="none"/><path d="M10 3.5 L15.5 4 L12.5 8.5 Z" fill="#f00"/></svg></div>
<div class="t" style="left:66px;top:623px;height:18px;line-height:18px;">Volume Oscillator 0선 하향이탈</div>
<div style="left:35px;top:650px;width:10px;height:1px;border-top:1px dotted #707070"></div>
<div style="left:45px;top:642px;width:16px;height:16px;"><svg width="16" height="16" style="position:absolute;left:0;top:0"><rect x="0.5" y="0.5" width="15" height="15" fill="#fff" stroke="#bbb"/><path d="M5.5 1V15M10.5 1V15M1 5.5H15M1 10.5H15" stroke="#d0d0d0"/><path d="M1.5 13.5 L5 10 L7.5 11 L10.5 7 L12 6.5" stroke="#f00" stroke-width="1.6" fill="none"/><path d="M10 3.5 L15.5 4 L12.5 8.5 Z" fill="#f00"/></svg></div>
<div class="t" style="left:66px;top:641px;height:18px;line-height:18px;">VR 강세이탈</div>
<div style="left:35px;top:668px;width:10px;height:1px;border-top:1px dotted #707070"></div>
<div style="left:45px;top:660px;width:16px;height:16px;"><svg width="16" height="16" style="position:absolute;left:0;top:0"><rect x="0.5" y="0.5" width="15" height="15" fill="#fff" stroke="#bbb"/><path d="M5.5 1V15M10.5 1V15M1 5.5H15M1 10.5H15" stroke="#d0d0d0"/><path d="M1.5 13.5 L5 10 L7.5 11 L10.5 7 L12 6.5" stroke="#f00" stroke-width="1.6" fill="none"/><path d="M10 3.5 L15.5 4 L12.5 8.5 Z" fill="#f00"/></svg></div>
<div class="t" style="left:66px;top:659px;height:18px;line-height:18px;">VR 강세진입</div>
<div style="left:35px;top:686px;width:10px;height:1px;border-top:1px dotted #707070"></div>
<div style="left:45px;top:678px;width:16px;height:16px;"><svg width="16" height="16" style="position:absolute;left:0;top:0"><rect x="0.5" y="0.5" width="15" height="15" fill="#fff" stroke="#bbb"/><path d="M5.5 1V15M10.5 1V15M1 5.5H15M1 10.5H15" stroke="#d0d0d0"/><path d="M1.5 13.5 L5 10 L7.5 11 L10.5 7 L12 6.5" stroke="#f00" stroke-width="1.6" fill="none"/><path d="M10 3.5 L15.5 4 L12.5 8.5 Z" fill="#f00"/></svg></div>
<div class="t" style="left:66px;top:677px;height:18px;line-height:18px;">VR 약세이탈</div>
<div style="left:35px;top:704px;width:10px;height:1px;border-top:1px dotted #707070"></div>
<div style="left:45px;top:696px;width:16px;height:16px;"><svg width="16" height="16" style="position:absolute;left:0;top:0"><rect x="0.5" y="0.5" width="15" height="15" fill="#fff" stroke="#bbb"/><path d="M5.5 1V15M10.5 1V15M1 5.5H15M1 10.5H15" stroke="#d0d0d0"/><path d="M1.5 13.5 L5 10 L7.5 11 L10.5 7 L12 6.5" stroke="#f00" stroke-width="1.6" fill="none"/><path d="M10 3.5 L15.5 4 L12.5 8.5 Z" fill="#f00"/></svg></div>
<div class="t" style="left:66px;top:695px;height:18px;line-height:18px;">VR 약세진입</div>
<div style="left:35px;top:722px;width:10px;height:1px;border-top:1px dotted #707070"></div>
<div style="left:45px;top:714px;width:16px;height:16px;"><svg width="16" height="16" style="position:absolute;left:0;top:0"><rect x="0.5" y="0.5" width="15" height="15" fill="#fff" stroke="#bbb"/><path d="M5.5 1V15M10.5 1V15M1 5.5H15M1 10.5H15" stroke="#d0d0d0"/><path d="M1.5 13.5 L5 10 L7.5 11 L10.5 7 L12 6.5" stroke="#f00" stroke-width="1.6" fill="none"/><path d="M10 3.5 L15.5 4 L12.5 8.5 Z" fill="#f00"/></svg></div>
<div class="t" style="left:66px;top:713px;height:18px;line-height:18px;">거래량 N봉 연속 감소</div>
<div style="left:35px;top:740px;width:10px;height:1px;border-top:1px dotted #707070"></div>
<div style="left:45px;top:732px;width:16px;height:16px;"><svg width="16" height="16" style="position:absolute;left:0;top:0"><rect x="0.5" y="0.5" width="15" height="15" fill="#fff" stroke="#bbb"/><path d="M5.5 1V15M10.5 1V15M1 5.5H15M1 10.5H15" stroke="#d0d0d0"/><path d="M1.5 13.5 L5 10 L7.5 11 L10.5 7 L12 6.5" stroke="#f00" stroke-width="1.6" fill="none"/><path d="M10 3.5 L15.5 4 L12.5 8.5 Z" fill="#f00"/></svg></div>
<div class="t" style="left:66px;top:731px;height:18px;line-height:18px;">거래량 N봉 연속 증가</div>
<div style="left:35px;top:758px;width:10px;height:1px;border-top:1px dotted #707070"></div>
<div style="left:45px;top:750px;width:16px;height:16px;"><svg width="16" height="16" style="position:absolute;left:0;top:0"><rect x="0.5" y="0.5" width="15" height="15" fill="#fff" stroke="#bbb"/><path d="M5.5 1V15M10.5 1V15M1 5.5H15M1 10.5H15" stroke="#d0d0d0"/><path d="M1.5 13.5 L5 10 L7.5 11 L10.5 7 L12 6.5" stroke="#f00" stroke-width="1.6" fill="none"/><path d="M10 3.5 L15.5 4 L12.5 8.5 Z" fill="#f00"/></svg></div>
<div class="t" style="left:66px;top:749px;height:18px;line-height:18px;">거래량 감소</div>
<div style="left:35px;top:776px;width:10px;height:1px;border-top:1px dotted #707070"></div>
<div style="left:45px;top:768px;width:16px;height:16px;"><svg width="16" height="16" style="position:absolute;left:0;top:0"><rect x="0.5" y="0.5" width="15" height="15" fill="#fff" stroke="#bbb"/><path d="M5.5 1V15M10.5 1V15M1 5.5H15M1 10.5H15" stroke="#d0d0d0"/><path d="M1.5 13.5 L5 10 L7.5 11 L10.5 7 L12 6.5" stroke="#f00" stroke-width="1.6" fill="none"/><path d="M10 3.5 L15.5 4 L12.5 8.5 Z" fill="#f00"/></svg></div>
<div class="t" style="left:66px;top:767px;height:18px;line-height:18px;">거래량 골든크로스</div>
<div style="left:35px;top:794px;width:10px;height:1px;border-top:1px dotted #707070"></div>
<div style="left:45px;top:786px;width:16px;height:16px;"><svg width="16" height="16" style="position:absolute;left:0;top:0"><rect x="0.5" y="0.5" width="15" height="15" fill="#fff" stroke="#bbb"/><path d="M5.5 1V15M10.5 1V15M1 5.5H15M1 10.5H15" stroke="#d0d0d0"/><path d="M1.5 13.5 L5 10 L7.5 11 L10.5 7 L12 6.5" stroke="#f00" stroke-width="1.6" fill="none"/><path d="M10 3.5 L15.5 4 L12.5 8.5 Z" fill="#f00"/></svg></div>
<div class="t" style="left:66px;top:785px;height:18px;line-height:18px;">거래량 데드크로스</div>
<div style="left:35px;top:812px;width:10px;height:1px;border-top:1px dotted #707070"></div>
<div style="left:45px;top:804px;width:16px;height:16px;"><svg width="16" height="16" style="position:absolute;left:0;top:0"><rect x="0.5" y="0.5" width="15" height="15" fill="#fff" stroke="#bbb"/><path d="M5.5 1V15M10.5 1V15M1 5.5H15M1 10.5H15" stroke="#d0d0d0"/><path d="M1.5 13.5 L5 10 L7.5 11 L10.5 7 L12 6.5" stroke="#f00" stroke-width="1.6" fill="none"/><path d="M10 3.5 L15.5 4 L12.5 8.5 Z" fill="#f00"/></svg></div>
<div class="t" style="left:66px;top:803px;height:18px;line-height:18px;">거래량 이동평균선 상승</div>
<div style="left:35px;top:830px;width:10px;height:1px;border-top:1px dotted #707070"></div>
<div style="left:45px;top:822px;width:16px;height:16px;"><svg width="16" height="16" style="position:absolute;left:0;top:0"><rect x="0.5" y="0.5" width="15" height="15" fill="#fff" stroke="#bbb"/><path d="M5.5 1V15M10.5 1V15M1 5.5H15M1 10.5H15" stroke="#d0d0d0"/><path d="M1.5 13.5 L5 10 L7.5 11 L10.5 7 L12 6.5" stroke="#f00" stroke-width="1.6" fill="none"/><path d="M10 3.5 L15.5 4 L12.5 8.5 Z" fill="#f00"/></svg></div>
<div class="t" style="left:66px;top:821px;height:18px;line-height:18px;">거래량 이동평균선 상승전환</div>
<div style="left:35px;top:848px;width:10px;height:1px;border-top:1px dotted #707070"></div>
<div style="left:45px;top:840px;width:16px;height:16px;"><svg width="16" height="16" style="position:absolute;left:0;top:0"><rect x="0.5" y="0.5" width="15" height="15" fill="#fff" stroke="#bbb"/><path d="M5.5 1V15M10.5 1V15M1 5.5H15M1 10.5H15" stroke="#d0d0d0"/><path d="M1.5 13.5 L5 10 L7.5 11 L10.5 7 L12 6.5" stroke="#f00" stroke-width="1.6" fill="none"/><path d="M10 3.5 L15.5 4 L12.5 8.5 Z" fill="#f00"/></svg></div>
<div class="t" style="left:66px;top:839px;height:18px;line-height:18px;">거래량 이동평균선 하락</div>
<div style="left:35px;top:866px;width:10px;height:1px;border-top:1px dotted #707070"></div>
<div style="left:45px;top:858px;width:16px;height:16px;"><svg width="16" height="16" style="position:absolute;left:0;top:0"><rect x="0.5" y="0.5" width="15" height="15" fill="#fff" stroke="#bbb"/><path d="M5.5 1V15M10.5 1V15M1 5.5H15M1 10.5H15" stroke="#d0d0d0"/><path d="M1.5 13.5 L5 10 L7.5 11 L10.5 7 L12 6.5" stroke="#f00" stroke-width="1.6" fill="none"/><path d="M10 3.5 L15.5 4 L12.5 8.5 Z" fill="#f00"/></svg></div>
<div class="t" style="left:66px;top:857px;height:18px;line-height:18px;">거래량 이동평균선 하락전환</div>
<div style="left:35px;top:884px;width:10px;height:1px;border-top:1px dotted #707070"></div>
<div style="left:45px;top:876px;width:16px;height:16px;"><svg width="16" height="16" style="position:absolute;left:0;top:0"><rect x="0.5" y="0.5" width="15" height="15" fill="#fff" stroke="#bbb"/><path d="M5.5 1V15M10.5 1V15M1 5.5H15M1 10.5H15" stroke="#d0d0d0"/><path d="M1.5 13.5 L5 10 L7.5 11 L10.5 7 L12 6.5" stroke="#f00" stroke-width="1.6" fill="none"/><path d="M10 3.5 L15.5 4 L12.5 8.5 Z" fill="#f00"/></svg></div>
<div class="t" style="left:66px;top:875px;height:18px;line-height:18px;">거래량 증가</div>
<div style="left:35px;top:902px;width:10px;height:1px;border-top:1px dotted #707070"></div>
<div style="left:45px;top:894px;width:16px;height:16px;"><svg width="16" height="16" style="position:absolute;left:0;top:0"><rect x="0.5" y="0.5" width="15" height="15" fill="#fff" stroke="#bbb"/><path d="M5.5 1V15M10.5 1V15M1 5.5H15M1 10.5H15" stroke="#d0d0d0"/><path d="M1.5 13.5 L5 10 L7.5 11 L10.5 7 L12 6.5" stroke="#f00" stroke-width="1.6" fill="none"/><path d="M10 3.5 L15.5 4 L12.5 8.5 Z" fill="#f00"/></svg></div>
<div class="t" style="left:66px;top:893px;height:18px;line-height:18px;">기준봉 검색</div>
<div style="left:35px;top:920px;width:10px;height:1px;border-top:1px dotted #707070"></div>
<div style="left:45px;top:912px;width:16px;height:16px;"><svg width="16" height="16" style="position:absolute;left:0;top:0"><rect x="0.5" y="0.5" width="15" height="15" fill="#fff" stroke="#222"/><path d="M5.5 1V15M10.5 1V15M1 5.5H15M1 10.5H15" stroke="#d0d0d0"/><path d="M1.5 13.5 L5 10 L7.5 11 L10.5 7 L12 6.5" stroke="#f00" stroke-width="1.6" fill="none"/><path d="M10 3.5 L15.5 4 L12.5 8.5 Z" fill="#f00"/></svg></div>
<div style="left:63px;top:911px;width:97px;height:18px;background:#ececec"></div>
<div class="t" style="left:66px;top:911px;height:18px;line-height:18px;">기준봉 검색_사본</div>
<div style="left:35px;top:938px;width:10px;height:1px;border-top:1px dotted #707070"></div>
<div style="left:45px;top:930px;width:16px;height:16px;"><svg width="16" height="16" style="position:absolute;left:0;top:0"><rect x="0.5" y="0.5" width="15" height="15" fill="#fff" stroke="#bbb"/><path d="M5.5 1V15M10.5 1V15M1 5.5H15M1 10.5H15" stroke="#d0d0d0"/><path d="M1.5 13.5 L5 10 L7.5 11 L10.5 7 L12 6.5" stroke="#f00" stroke-width="1.6" fill="none"/><path d="M10 3.5 L15.5 4 L12.5 8.5 Z" fill="#f00"/></svg></div>
<div class="t" style="left:66px;top:929px;height:18px;line-height:18px;">이격도 과열 이탈</div>
<div style="left:35px;top:956px;width:10px;height:1px;border-top:1px dotted #707070"></div>
<div style="left:45px;top:948px;width:16px;height:16px;"><svg width="16" height="16" style="position:absolute;left:0;top:0"><rect x="0.5" y="0.5" width="15" height="15" fill="#fff" stroke="#bbb"/><path d="M5.5 1V15M10.5 1V15M1 5.5H15M1 10.5H15" stroke="#d0d0d0"/><path d="M1.5 13.5 L5 10 L7.5 11 L10.5 7 L12 6.5" stroke="#f00" stroke-width="1.6" fill="none"/><path d="M10 3.5 L15.5 4 L12.5 8.5 Z" fill="#f00"/></svg></div>
<div class="t" style="left:66px;top:947px;height:18px;line-height:18px;">이격도 과열</div>
<div style="left:35px;top:974px;width:10px;height:1px;border-top:1px dotted #707070"></div>
<div style="left:45px;top:966px;width:16px;height:16px;"><svg width="16" height="16" style="position:absolute;left:0;top:0"><rect x="0.5" y="0.5" width="15" height="15" fill="#fff" stroke="#bbb"/><path d="M5.5 1V15M10.5 1V15M1 5.5H15M1 10.5H15" stroke="#d0d0d0"/><path d="M1.5 13.5 L5 10 L7.5 11 L10.5 7 L12 6.5" stroke="#f00" stroke-width="1.6" fill="none"/><path d="M10 3.5 L15.5 4 L12.5 8.5 Z" fill="#f00"/></svg></div>
<div class="t" style="left:66px;top:965px;height:18px;line-height:18px;">이격도 침체 극복</div>
<div style="left:35px;top:992px;width:10px;height:1px;border-top:1px dotted #707070"></div>
<div style="left:45px;top:984px;width:16px;height:16px;"><svg width="16" height="16" style="position:absolute;left:0;top:0"><rect x="0.5" y="0.5" width="15" height="15" fill="#fff" stroke="#bbb"/><path d="M5.5 1V15M10.5 1V15M1 5.5H15M1 10.5H15" stroke="#d0d0d0"/><path d="M1.5 13.5 L5 10 L7.5 11 L10.5 7 L12 6.5" stroke="#f00" stroke-width="1.6" fill="none"/><path d="M10 3.5 L15.5 4 L12.5 8.5 Z" fill="#f00"/></svg></div>
<div class="t" style="left:66px;top:983px;height:18px;line-height:18px;">이격도 침체</div>
<div style="left:35px;top:1010px;width:10px;height:1px;border-top:1px dotted #707070"></div>
<div style="left:45px;top:1002px;width:16px;height:16px;"><svg width="16" height="16" style="position:absolute;left:0;top:0"><rect x="0.5" y="0.5" width="15" height="15" fill="#fff" stroke="#bbb"/><path d="M5.5 1V15M10.5 1V15M1 5.5H15M1 10.5H15" stroke="#d0d0d0"/><path d="M1.5 13.5 L5 10 L7.5 11 L10.5 7 L12 6.5" stroke="#f00" stroke-width="1.6" fill="none"/><path d="M10 3.5 L15.5 4 L12.5 8.5 Z" fill="#f00"/></svg></div>
<div class="t" style="left:66px;top:1001px;height:18px;line-height:18px;">이동평균 수렴후 주가 상향돌파</div>
<div style="left:35px;top:1028px;width:10px;height:1px;border-top:1px dotted #707070"></div>
<div style="left:45px;top:1020px;width:16px;height:16px;"><svg width="16" height="16" style="position:absolute;left:0;top:0"><rect x="0.5" y="0.5" width="15" height="15" fill="#fff" stroke="#bbb"/><path d="M5.5 1V15M10.5 1V15M1 5.5H15M1 10.5H15" stroke="#d0d0d0"/><path d="M1.5 13.5 L5 10 L7.5 11 L10.5 7 L12 6.5" stroke="#f00" stroke-width="1.6" fill="none"/><path d="M10 3.5 L15.5 4 L12.5 8.5 Z" fill="#f00"/></svg></div>
<div class="t" style="left:66px;top:1019px;height:18px;line-height:18px;">이동평균 이격도 과열</div>
<div style="left:35px;top:1046px;width:10px;height:1px;border-top:1px dotted #707070"></div>
<div style="left:45px;top:1038px;width:16px;height:16px;"><svg width="16" height="16" style="position:absolute;left:0;top:0"><rect x="0.5" y="0.5" width="15" height="15" fill="#fff" stroke="#bbb"/><path d="M5.5 1V15M10.5 1V15M1 5.5H15M1 10.5H15" stroke="#d0d0d0"/><path d="M1.5 13.5 L5 10 L7.5 11 L10.5 7 L12 6.5" stroke="#f00" stroke-width="1.6" fill="none"/><path d="M10 3.5 L15.5 4 L12.5 8.5 Z" fill="#f00"/></svg></div>
<div class="t" style="left:66px;top:1037px;height:18px;line-height:18px;">이동평균 이격도 침체</div>
<div style="left:35px;top:1064px;width:10px;height:1px;border-top:1px dotted #707070"></div>
<div style="left:45px;top:1056px;width:16px;height:16px;"><svg width="16" height="16" style="position:absolute;left:0;top:0"><rect x="0.5" y="0.5" width="15" height="15" fill="#fff" stroke="#bbb"/><path d="M5.5 1V15M10.5 1V15M1 5.5H15M1 10.5H15" stroke="#d0d0d0"/><path d="M1.5 13.5 L5 10 L7.5 11 L10.5 7 L12 6.5" stroke="#f00" stroke-width="1.6" fill="none"/><path d="M10 3.5 L15.5 4 L12.5 8.5 Z" fill="#f00"/></svg></div>
<div class="t" style="left:66px;top:1055px;height:18px;line-height:18px;">이동평균선 골든크로스</div>
<div style="left:35px;top:1082px;width:10px;height:1px;border-top:1px dotted #707070"></div>
<div style="left:45px;top:1074px;width:16px;height:16px;"><svg width="16" height="16" style="position:absolute;left:0;top:0"><rect x="0.5" y="0.5" width="15" height="15" fill="#fff" stroke="#bbb"/><path d="M5.5 1V15M10.5 1V15M1 5.5H15M1 10.5H15" stroke="#d0d0d0"/><path d="M1.5 13.5 L5 10 L7.5 11 L10.5 7 L12 6.5" stroke="#f00" stroke-width="1.6" fill="none"/><path d="M10 3.5 L15.5 4 L12.5 8.5 Z" fill="#f00"/></svg></div>
<div class="t" style="left:66px;top:1073px;height:18px;line-height:18px;">이동평균선 데드크로스</div>
<div style="left:35px;top:1100px;width:10px;height:1px;border-top:1px dotted #707070"></div>
<div style="left:45px;top:1092px;width:16px;height:16px;"><svg width="16" height="16" style="position:absolute;left:0;top:0"><rect x="0.5" y="0.5" width="15" height="15" fill="#fff" stroke="#bbb"/><path d="M5.5 1V15M10.5 1V15M1 5.5H15M1 10.5H15" stroke="#d0d0d0"/><path d="M1.5 13.5 L5 10 L7.5 11 L10.5 7 L12 6.5" stroke="#f00" stroke-width="1.6" fill="none"/><path d="M10 3.5 L15.5 4 L12.5 8.5 Z" fill="#f00"/></svg></div>
<div class="t" style="left:66px;top:1091px;height:18px;line-height:18px;">이동평균선 상승</div>
<div style="left:273px;top:461px;width:16px;height:638px;background:#f0f0f0"></div>
<div style="left:273px;top:796px;width:15px;height:124px;background:#cdcdcd"></div>
<svg style="position:absolute;left:276px;top:466px" width="10" height="8"><path d="M1.5 6.5 L5 3 L8.5 6.5" stroke="#555" stroke-width="2" fill="none"/></svg>
<svg style="position:absolute;left:276px;top:1086px" width="10" height="8"><path d="M1.5 1.5 L5 5 L8.5 1.5" stroke="#555" stroke-width="2" fill="none"/></svg>
<div style="left:6px;top:1099px;width:284px;height:7px;background:#a4bfd8"></div>
<div style="left:6px;top:1098px;width:284px;height:2px;background:#707070"></div>
<div style="left:3px;top:1106px;width:287px;height:1px;background:#6a7a8a"></div>
<div style="left:5px;top:1107px;width:46px;height:14px;background:#1f5089;border-radius:0 0 3px 3px;border:1px solid #0d2e5a"></div>
<div class="t" style="left:5px;top:1106px;height:15px;line-height:15px;width:46px;text-align:center;color:#fff">기능순</div>
<div style="left:52px;top:1107px;width:60px;height:15px;background:#c8c8c8;border:1px solid #777;border-radius:0 0 4px 4px"></div>
<div class="t" style="left:52px;top:1106px;height:15px;line-height:15px;width:60px;text-align:center;color:#1a1a1a">가나다순</div>
<div style="left:294px;top:454px;width:3px;height:670px;background:#e4ebf2"></div>
<div style="left:297px;top:457px;width:200px;height:67px;background:#fff;border:1px solid #6b6b6b;border-right-color:#6b6b6b;border-bottom-color:#6b6b6b"></div>
<div style="left:298px;top:458px;width:198px;height:16px;background:#e9f1fb;border-top:1px solid #fff;border-bottom:1px solid #9c9c9c"></div>
<div style="left:298px;top:490px;width:198px;height:16px;background:#f4f4f4"></div>
<div style="left:397px;top:474px;width:1px;height:49px;background:#d8d8d8"></div>
<div style="left:397px;top:458px;width:1px;height:15px;background:#9c9c9c"></div>
<div style="left:398px;top:458px;width:1px;height:15px;background:#fff"></div>
<div class="t" style="left:298px;top:458px;height:15px;line-height:15px;width:99px;text-align:center;color:#333">변수이름</div>
<div class="t" style="left:398px;top:458px;height:15px;line-height:15px;width:98px;text-align:center;color:#333">변수값</div>
<div style="left:501px;top:457px;width:488px;height:67px;border:1px solid #8f9aa8;border-right-color:#fff;border-bottom-color:#fff"></div>
<div style="left:508px;top:464px;width:180px;height:22px;background:#fff"></div>
<div class="t" style="left:512px;top:462px;height:22px;line-height:22px;">기준봉 검색_사본</div>
<div style="left:692px;top:466px;width:14px;height:14px;background:#fff;border:1px solid;border-color:#808080 #fff #fff #808080;box-shadow:inset 1px 1px 0 #404040"></div>
<div class="t" style="left:708px;top:462px;height:20px;line-height:20px;">검색에 필요한 최소 기간 :</div>
<div style="left:854px;top:464px;width:41px;height:22px;background:#ececec;border:1px solid #9a9a9a;border-right-color:#fff;border-bottom-color:#fff"></div>
<div class="t" style="left:854px;top:462px;height:14px;line-height:14px;width:38px;text-align:right;font-size:11px">0</div>
<div class="t" style="left:902px;top:463px;height:20px;line-height:20px;">봉</div>
<div class="t" style="left:508px;top:495px;height:20px;line-height:20px;">기준봉</div>
<div style="left:551px;top:495px;width:41px;height:22px;background:#fff;border:1px solid #8a8a8a;border-right-color:#e0e0e0;border-bottom-color:#e0e0e0"></div>
<div class="t" style="left:551px;top:493px;height:14px;line-height:14px;width:39px;text-align:right;font-size:11px">0</div>
<div style="left:597px;top:497px;width:12px;height:12px;background:#fff;border:1px solid #9a9a9a;border-radius:50%"></div>
<div style="left:601px;top:501px;width:4px;height:4px;background:#000;border-radius:50%"></div>
<div class="t" style="left:611px;top:492px;height:20px;line-height:20px;">일</div>
<div style="left:630px;top:497px;width:12px;height:12px;background:#fff;border:1px solid #9a9a9a;border-radius:50%"></div>
<div class="t" style="left:644px;top:492px;height:20px;line-height:20px;">주</div>
<div style="left:663px;top:497px;width:12px;height:12px;background:#fff;border:1px solid #9a9a9a;border-radius:50%"></div>
<div class="t" style="left:677px;top:492px;height:20px;line-height:20px;">월</div>
<div style="left:696px;top:497px;width:12px;height:12px;background:#fff;border:1px solid #9a9a9a;border-radius:50%"></div>
<div class="t" style="left:710px;top:492px;height:20px;line-height:20px;">분</div>
<div style="left:727px;top:495px;width:48px;height:22px;background:#e8e8e8;border:1px solid #c0c0c0"></div>
<div class="t" style="left:732px;top:495px;height:22px;line-height:22px;color:#999">1</div>
<svg style="position:absolute;left:763px;top:504px" width="9" height="5"><path d="M1 0.5 L8 0.5 L4.5 4.5 Z" fill="#aaa"/></svg>
<div class="btn2" style="left:779px;top:495px;width:60px;height:20px;"></div>
<div class="t" style="left:779px;top:495px;height:20px;line-height:20px;width:60px;text-align:center;">수정</div>
<div class="btn2" style="left:842px;top:495px;width:60px;height:20px;"></div>
<div class="t" style="left:842px;top:495px;height:20px;line-height:20px;width:60px;text-align:center;">초기화</div>
<div class="btn2" style="left:905px;top:495px;width:60px;height:20px;"></div>
<div class="t" style="left:905px;top:495px;height:20px;line-height:20px;width:60px;text-align:center;">편집</div>
<div style="left:297px;top:527px;width:692px;height:242px;background:#fff;border:1px solid #6b6b6b;border-bottom-width:2px"></div>
<div style="left:298px;top:528px;width:690px;height:16px;background:#e9f1fb;border-top:1px solid #fff;border-bottom:1px solid #9c9c9c"></div>
<div style="left:298px;top:544px;width:690px;height:17px;background:#cbcbe3"></div>
<div style="left:298px;top:561px;width:690px;height:17px;background:#f4f4f4"></div>
<div style="left:298px;top:578px;width:690px;height:17px;background:#ffffff"></div>
<div style="left:298px;top:595px;width:690px;height:17px;background:#f4f4f4"></div>
<div style="left:298px;top:612px;width:690px;height:17px;background:#ffffff"></div>
<div style="left:298px;top:629px;width:690px;height:17px;background:#f4f4f4"></div>
<div style="left:298px;top:646px;width:690px;height:17px;background:#ffffff"></div>
<div style="left:298px;top:663px;width:690px;height:17px;background:#f4f4f4"></div>
<div style="left:298px;top:680px;width:690px;height:17px;background:#ffffff"></div>
<div style="left:298px;top:697px;width:690px;height:17px;background:#f4f4f4"></div>
<div style="left:298px;top:714px;width:690px;height:17px;background:#ffffff"></div>
<div style="left:298px;top:731px;width:690px;height:17px;background:#f4f4f4"></div>
<div style="left:298px;top:748px;width:690px;height:17px;background:#ffffff"></div>
<div style="left:959px;top:544px;width:29px;height:17px;background:#a7c0da"></div>
<div style="left:327px;top:544px;width:1px;height:223px;background:#d8d8d8"></div>
<div style="left:327px;top:528px;width:1px;height:15px;background:#9c9c9c"></div>
<div style="left:328px;top:528px;width:1px;height:15px;background:#fff"></div>
<div style="left:790px;top:544px;width:1px;height:223px;background:#d8d8d8"></div>
<div style="left:790px;top:528px;width:1px;height:15px;background:#9c9c9c"></div>
<div style="left:791px;top:528px;width:1px;height:15px;background:#fff"></div>
<div style="left:910px;top:544px;width:1px;height:223px;background:#d8d8d8"></div>
<div style="left:910px;top:528px;width:1px;height:15px;background:#9c9c9c"></div>
<div style="left:911px;top:528px;width:1px;height:15px;background:#fff"></div>
<div style="left:958px;top:544px;width:1px;height:223px;background:#d8d8d8"></div>
<div style="left:958px;top:528px;width:1px;height:15px;background:#9c9c9c"></div>
<div style="left:959px;top:528px;width:1px;height:15px;background:#fff"></div>
<div class="t" style="left:298px;top:528px;height:16px;line-height:16px;width:29px;text-align:center;color:#333">조건</div>
<div class="t" style="left:327px;top:528px;height:16px;line-height:16px;width:464px;text-align:center;color:#333">내        용</div>
<svg style="position:absolute;left:794px;top:530px" width="14" height="12"><rect x="1.5" y="1.5" width="9" height="9" fill="#fff" stroke="#000" stroke-width="1.2"/><path d="M3.5 6 L5.5 8.5 L11 2.5" stroke="#000" stroke-width="1" fill="none"/></svg>
<div class="t" style="left:812px;top:528px;height:16px;line-height:16px;color:#333">목록에 조건 추가</div>
<div style="left:914px;top:531px;width:10px;height:10px;background:#fff;border:1px solid #333"></div>
<div class="t" style="left:929px;top:528px;height:16px;line-height:16px;color:#333">결과</div>
<div class="t" style="left:962px;top:528px;height:16px;line-height:16px;color:#333">삭제</div>
<div class="t" style="left:298px;top:544px;height:17px;line-height:17px;width:29px;text-align:center;">A</div>
<div class="t" style="left:333px;top:544px;height:17px;line-height:17px;letter-spacing:0.12px">[기준봉 검색_사본] 사용자 설정 검색기간 사용하지 않음 기준봉:[0] 사용데이터:일봉</div>
<div style="left:929px;top:546px;width:13px;height:13px;background:#fff;border:1px solid #000"></div>
<div class="t" style="left:959px;top:545px;height:17px;line-height:17px;width:29px;text-align:center;font-size:13px">X</div>
<div class="t" style="left:300px;top:770px;height:20px;line-height:20px;color:#111">조건식</div>
<div style="left:339px;top:771px;width:353px;height:21px;background:#fff;border:1px solid #6a6a6a"></div>
<div class="t" style="left:341px;top:771px;height:20px;line-height:20px;font-weight:bold">A</div>
<svg style="position:absolute;left:676px;top:772px" width="14" height="19"><rect x="0" y="0" width="14" height="19" fill="#f0f0f0"/><path d="M4 7 L7 4 L10 7" stroke="#333" stroke-width="1.3" fill="none"/><path d="M4 12 L7 15 L10 12" stroke="#333" stroke-width="1.3" fill="none"/></svg>
<svg style="position:absolute;left:696px;top:776px" width="13" height="10"><defs><linearGradient id="gtri" x1="0" y1="0" x2="0" y2="1"><stop offset="0" stop-color="#fff"/><stop offset="1" stop-color="#bbb"/></linearGradient></defs><path d="M1 8.5 L6.5 1.5 L12 8.5 Z" fill="url(#gtri)" stroke="#111" stroke-width="1.2"/><rect x="1" y="7.8" width="11" height="1.6" fill="#111"/></svg>
<svg style="position:absolute;left:716px;top:776px" width="14" height="10"><path d="M1 6 L5 1.5 L13 1.5 L9 6 Z" fill="#ddd" stroke="#111" stroke-width="1.2"/><path d="M1 6 L9 6 L9 9 L1 9 Z" fill="#fafafa" stroke="#111" stroke-width="1.3"/><path d="M9 9 L13 4.5 L13 1.5" stroke="#111" stroke-width="1.3" fill="none"/></svg>
<svg style="position:absolute;left:738px;top:774px" width="13" height="12"><path d="M3.5 1.5 Q1 6 3.5 10.5" stroke="#222" stroke-width="1.8" fill="none"/><path d="M9.5 1.5 Q12 6 9.5 10.5" stroke="#222" stroke-width="1.8" fill="none"/></svg>
<svg style="position:absolute;left:758px;top:774px" width="15" height="12"><path d="M3.5 1.5 Q1 6 3.5 10.5" stroke="#222" stroke-width="1.8" fill="none"/><path d="M11.5 1.5 Q14 6 11.5 10.5" stroke="#222" stroke-width="1.8" fill="none"/><path d="M5.5 4 L9.5 8.5 M9.5 4 L5.5 8.5" stroke="#c00000" stroke-width="1.5"/></svg>
<svg style="position:absolute;left:780px;top:774px" width="14" height="12"><rect x="1" y="1" width="2" height="7" fill="#222"/><rect x="1" y="9" width="2" height="2" fill="#222"/><path d="M6.5 1.5 Q4.5 6 6.5 10.5" stroke="#222" stroke-width="1.8" fill="none"/><path d="M11 1.5 Q13 6 11 10.5" stroke="#222" stroke-width="1.8" fill="none"/></svg>
<div class="btn2" style="left:798px;top:771px;width:72px;height:20px;"></div>
<div class="t" style="left:798px;top:771px;height:20px;line-height:20px;width:72px;text-align:center;">조건저장</div>
<div class="btn2" style="left:873px;top:771px;width:115px;height:20px;"></div>
<div class="t" style="left:873px;top:771px;height:20px;line-height:20px;width:115px;text-align:center;">다른이름으로저장</div>
<div style="left:297px;top:792px;width:693px;height:4px;background:#f4f6f8"></div>
<div style="left:297px;top:796px;width:693px;height:1px;background:#9a9a9a"></div>
<div style="left:296px;top:796px;width:1px;height:25px;background:#9a9a9a"></div>
<svg style="position:absolute;left:300px;top:801px" width="16" height="16"><path d="M1.5 1 V15" stroke="#222" stroke-dasharray="1.5 2" stroke-width="1.2"/><defs><linearGradient id="gic" x1="0" y1="0" x2="1" y2="0"><stop offset="0" stop-color="#fff"/><stop offset="1" stop-color="#ccc"/></linearGradient></defs><rect x="4.5" y="1.5" width="10" height="13" fill="url(#gic)" stroke="#111"/><path d="M2.5 8 L7 4 L7 6.5 L12 6.5 L12 9.5 L7 9.5 L7 12 Z" fill="#000"/></svg>
<div style="left:319px;top:798px;width:170px;height:20px;background:#fff;border:1px solid #e8e8e8"></div>
<div class="t" style="left:325px;top:799px;height:18px;line-height:18px;">**사용자 검색조건**</div>
<div style="left:476px;top:801px;width:11px;height:15px;background:#ececec"></div>
<svg style="position:absolute;left:476px;top:806px" width="11" height="6"><path d="M2 1 L9 1 L5.5 5 Z" fill="#000"/></svg>
<div class="btn2" style="left:494px;top:799px;width:80px;height:20px;"></div>
<div class="t" style="left:494px;top:799px;height:20px;line-height:20px;width:80px;text-align:center;">검      색</div>
<div style="left:574px;top:799px;width:9px;height:20px;background:#a4bfd8;border-left:1px solid #fff;border-right:1px solid #777"></div>
<svg style="position:absolute;left:574px;top:806px" width="9" height="6"><path d="M1 1 L8 1 L4.5 5 Z" fill="#000"/></svg>
<div class="btn2" style="left:586px;top:799px;width:84px;height:20px;"></div>
<div class="t" style="left:586px;top:799px;height:20px;line-height:20px;width:84px;text-align:center;">종목 불러오기</div>
<div class="btn2" style="left:673px;top:799px;width:84px;height:20px;"></div>
<div class="t" style="left:673px;top:799px;height:20px;line-height:20px;width:84px;text-align:center;">종목 내보내기</div>
<div class="btn2" style="left:760px;top:799px;width:30px;height:20px;"></div>
<div class="t" style="left:760px;top:799px;height:20px;line-height:20px;width:30px;text-align:center;">설정</div>
<svg style="position:absolute;left:794px;top:800px" width="18" height="16"><defs><linearGradient id="gck" x1="0" y1="0" x2="1" y2="1"><stop offset="0" stop-color="#fff"/><stop offset="1" stop-color="#d8d8d8"/></linearGradient></defs><rect x="1.5" y="2.5" width="12" height="12" fill="url(#gck)" stroke="#000" stroke-width="1.3"/><path d="M3.5 8.5 L7 12 L15.5 3" stroke="#000" stroke-width="2.6" fill="none"/></svg>
<svg style="position:absolute;left:815px;top:800px" width="16" height="17"><defs><radialGradient id="gcl" cx="0.4" cy="0.35" r="0.7"><stop offset="0" stop-color="#fff"/><stop offset="1" stop-color="#c8c8c8"/></radialGradient></defs><circle cx="8" cy="8.5" r="6.6" fill="url(#gcl)" stroke="#111" stroke-width="1.4"/><path d="M7.5 5 L7.5 9 L10.5 9" stroke="#000" stroke-width="1.5" fill="none"/></svg>
<svg style="position:absolute;left:838px;top:801px" width="14" height="16"><text x="1" y="6.5" font-family="Liberation Sans" font-size="7.5" font-weight="bold" fill="#111">AU</text><text x="1" y="14.5" font-family="Liberation Sans" font-size="7.5" font-weight="bold" fill="#111">TO</text></svg>
<svg style="position:absolute;left:860px;top:800px" width="10" height="16"><path d="M5 1 L9 6 L6.3 6 L6.3 15 L3.7 15 L3.7 6 L1 6 Z" fill="#555" stroke="#444" stroke-width="0.6"/></svg>
<svg style="position:absolute;left:882px;top:801px" width="10" height="16"><path d="M5 15 L9 10 L6.3 10 L6.3 1 L3.7 1 L3.7 10 L1 10 Z" fill="#555" stroke="#444" stroke-width="0.6"/></svg>
<svg style="position:absolute;left:970px;top:801px" width="16" height="16"><path d="M1.5 1.5 H15" stroke="#111" stroke-dasharray="1.5 2" stroke-width="1.3"/><defs><linearGradient id="gup" x1="0" y1="0" x2="0" y2="1"><stop offset="0" stop-color="#fff"/><stop offset="1" stop-color="#d0d0d0"/></linearGradient></defs><path d="M1.5 4.5 V14.5 H14.5 V4.5" fill="url(#gup)" stroke="#111" stroke-width="1.3"/><path d="M8 4 L12 8.5 L9.3 8.5 L9.3 13 L6.7 13 L6.7 8.5 L4 8.5 Z" fill="#000"/></svg>
<div style="left:297px;top:821px;width:692px;height:303px;background:#fff;border:1px solid #6b6b6b;border-right-color:#6b6b6b;border-bottom-color:#6b6b6b"></div>
<div style="left:298px;top:822px;width:690px;height:16px;background:#e9f1fb;border-top:1px solid #fff;border-bottom:1px solid #9c9c9c"></div>
<div style="left:298px;top:838px;width:690px;height:17px;background:#dcdcf8"></div>
<div style="left:298px;top:855px;width:690px;height:17px;background:#dcdcf8"></div>
<div style="left:298px;top:872px;width:690px;height:17px;background:#dcdcf8"></div>
<div style="left:298px;top:889px;width:690px;height:17px;background:#f4f4f4"></div>
<div style="left:298px;top:906px;width:690px;height:17px;background:#ffffff"></div>
<div style="left:298px;top:923px;width:690px;height:17px;background:#ffffff"></div>
<div style="left:298px;top:940px;width:690px;height:17px;background:#f4f4f4"></div>
<div style="left:298px;top:957px;width:690px;height:17px;background:#f4f4f4"></div>
<div style="left:298px;top:974px;width:690px;height:17px;background:#ffffff"></div>
<div style="left:298px;top:991px;width:690px;height:17px;background:#ffffff"></div>
<div style="left:298px;top:1008px;width:690px;height:17px;background:#f4f4f4"></div>
<div style="left:298px;top:1025px;width:690px;height:17px;background:#f4f4f4"></div>
<div style="left:298px;top:1042px;width:690px;height:17px;background:#ffffff"></div>
<div style="left:298px;top:1059px;width:690px;height:17px;background:#ffffff"></div>
<div style="left:298px;top:1076px;width:690px;height:17px;background:#f4f4f4"></div>
<div style="left:298px;top:1093px;width:690px;height:14px;background:#f4f4f4"></div>
<div style="left:314px;top:838px;width:1px;height:269px;background:#d8d8d8"></div>
<div style="left:314px;top:822px;width:1px;height:15px;background:#9c9c9c"></div>
<div style="left:315px;top:822px;width:1px;height:15px;background:#fff"></div>
<div style="left:564px;top:838px;width:1px;height:269px;background:#d8d8d8"></div>
<div style="left:564px;top:822px;width:1px;height:15px;background:#9c9c9c"></div>
<div style="left:565px;top:822px;width:1px;height:15px;background:#fff"></div>
<div style="left:664px;top:838px;width:1px;height:269px;background:#d8d8d8"></div>
<div style="left:664px;top:822px;width:1px;height:15px;background:#9c9c9c"></div>
<div style="left:665px;top:822px;width:1px;height:15px;background:#fff"></div>
<div style="left:764px;top:838px;width:1px;height:269px;background:#d8d8d8"></div>
<div style="left:764px;top:822px;width:1px;height:15px;background:#9c9c9c"></div>
<div style="left:765px;top:822px;width:1px;height:15px;background:#fff"></div>
<div style="left:864px;top:838px;width:1px;height:269px;background:#d8d8d8"></div>
<div style="left:864px;top:822px;width:1px;height:15px;background:#9c9c9c"></div>
<div style="left:865px;top:822px;width:1px;height:15px;background:#fff"></div>
<div style="left:964px;top:838px;width:1px;height:269px;background:#d8d8d8"></div>
<div style="left:964px;top:822px;width:1px;height:15px;background:#9c9c9c"></div>
<div style="left:965px;top:822px;width:1px;height:15px;background:#fff"></div>
<div style="left:464px;top:822px;width:1px;height:15px;background:#9c9c9c"></div>
<div style="left:465px;top:822px;width:1px;height:15px;background:#fff"></div>
<div style="left:464px;top:838px;width:1px;height:269px;background:#000"></div>
<svg style="position:absolute;left:301px;top:825px" width="17" height="12"><rect x="1.5" y="1.5" width="9" height="9" fill="#fff" stroke="#000" stroke-width="1.2"/><path d="M3.5 6 L5.5 8.5 L11 2.5" stroke="#000" stroke-width="1" fill="none"/></svg>
<svg style="position:absolute;left:318px;top:825px" width="10" height="11"><rect x="0" y="0" width="10" height="11" fill="#dcc8c4"/><path d="M5 1 L9.5 5.5 L6.8 5.5 L6.8 10.5 L3.2 10.5 L3.2 5.5 L0.5 5.5 Z" fill="#d00000"/></svg>
<div class="t" style="left:315px;top:822px;height:16px;line-height:16px;width:150px;text-align:center;color:#333">종목명(3)</div>
<div class="t" style="left:464px;top:822px;height:16px;line-height:16px;width:100px;text-align:center;color:#333">종목코드</div>
<div class="t" style="left:564px;top:822px;height:16px;line-height:16px;width:100px;text-align:center;color:#333">현재가</div>
<div class="t" style="left:664px;top:822px;height:16px;line-height:16px;width:100px;text-align:center;color:#333">전일대비(%)</div>
<div class="t" style="left:764px;top:822px;height:16px;line-height:16px;width:100px;text-align:center;color:#333">거래량</div>
<div class="t" style="left:864px;top:822px;height:16px;line-height:16px;width:100px;text-align:center;color:#333">시가</div>
<svg style="position:absolute;left:300px;top:839px" width="17" height="15"><rect x="1.5" y="2.5" width="11" height="11" fill="#fff" stroke="#000" stroke-width="1.6"/><path d="M3.5 7.5 L6.5 11 L14.5 2.5" stroke="#000" stroke-width="2.5" fill="none"/></svg>
<div class="t" style="left:320px;top:839px;height:17px;line-height:17px;">(Q) DSC인베스트먼트</div>
<div class="t" style="left:464px;top:839px;height:17px;line-height:17px;width:100px;text-align:center;">241520</div>
<div class="t" style="left:564px;top:839px;height:17px;line-height:17px;width:94px;text-align:right;color:#ff0000">5,460</div>
<svg style="position:absolute;left:667px;top:842px" width="11" height="10"><path d="M5.5 0.5 L10.8 9.5 L0.2 9.5 Z" fill="#ff0000"/></svg>
<div class="t" style="left:664px;top:839px;height:17px;line-height:17px;width:94px;text-align:right;color:#ff0000">230 ( 4.40)</div>
<div class="t" style="left:764px;top:839px;height:17px;line-height:17px;width:94px;text-align:right;">2,024(만)</div>
<div class="t" style="left:864px;top:839px;height:17px;line-height:17px;width:94px;text-align:right;color:#ff0000">5,840</div>
<svg style="position:absolute;left:300px;top:856px" width="17" height="15"><rect x="1.5" y="2.5" width="11" height="11" fill="#fff" stroke="#000" stroke-width="1.6"/><path d="M3.5 7.5 L6.5 11 L14.5 2.5" stroke="#000" stroke-width="2.5" fill="none"/></svg>
<div class="t" style="left:320px;top:856px;height:17px;line-height:17px;">(K) 동양철관</div>
<div class="t" style="left:464px;top:856px;height:17px;line-height:17px;width:100px;text-align:center;">008970</div>
<div class="t" style="left:564px;top:856px;height:17px;line-height:17px;width:94px;text-align:right;color:#ff0000">1,208</div>
<svg style="position:absolute;left:667px;top:859px" width="11" height="10"><path d="M5.5 0.5 L10.8 9.5 L0.2 9.5 Z" fill="#ff0000"/></svg>
<div class="t" style="left:664px;top:856px;height:17px;line-height:17px;width:94px;text-align:right;color:#ff0000">2 ( 0.17)</div>
<div class="t" style="left:764px;top:856px;height:17px;line-height:17px;width:94px;text-align:right;">6,516(만)</div>
<div class="t" style="left:864px;top:856px;height:17px;line-height:17px;width:94px;text-align:right;color:#0000c8">1,200</div>
<svg style="position:absolute;left:300px;top:873px" width="17" height="15"><rect x="1.5" y="2.5" width="11" height="11" fill="#fff" stroke="#000" stroke-width="1.6"/><path d="M3.5 7.5 L6.5 11 L14.5 2.5" stroke="#000" stroke-width="2.5" fill="none"/></svg>
<div class="t" style="left:320px;top:873px;height:17px;line-height:17px;">(Q) 오리엔트정공</div>
<div class="t" style="left:464px;top:873px;height:17px;line-height:17px;width:100px;text-align:center;">065500</div>
<div class="t" style="left:564px;top:873px;height:17px;line-height:17px;width:94px;text-align:right;color:#0000c8">8,400</div>
<svg style="position:absolute;left:667px;top:876px" width="11" height="10"><path d="M0.2 0.5 L10.8 0.5 L5.5 9.5 Z" fill="#0000c0"/></svg>
<div class="t" style="left:664px;top:873px;height:17px;line-height:17px;width:94px;text-align:right;color:#0000c8">780 ( 8.50)</div>
<div class="t" style="left:764px;top:873px;height:17px;line-height:17px;width:94px;text-align:right;">8,554,574</div>
<div class="t" style="left:864px;top:873px;height:17px;line-height:17px;width:94px;text-align:right;color:#0000c8">8,800</div>
<div style="left:298px;top:1107px;width:690px;height:15px;background:repeating-linear-gradient(45deg,#f6f6f6 0 1px,#f0f0f0 1px 2px)"></div>
<div style="left:298px;top:1107px;width:16px;height:15px;background:#f0f0f0;border:1px solid;border-color:#f8f8f8 #6a6a6a #6a6a6a #f8f8f8;box-shadow:inset -1px -1px 0 #a0a0a0"></div>
<svg style="position:absolute;left:298px;top:1107px" width="16" height="15"><path d="M10.0 3.5 L6.0 7.5 L10.0 11.5 Z" fill="#000"/></svg>
<div style="left:315px;top:1107px;width:197px;height:15px;background:#f0f0f0;border:1px solid;border-color:#f8f8f8 #6a6a6a #6a6a6a #f8f8f8;box-shadow:inset -1px -1px 0 #a0a0a0"></div>
<div style="left:972px;top:1107px;width:16px;height:15px;background:#f0f0f0;border:1px solid;border-color:#f8f8f8 #6a6a6a #6a6a6a #f8f8f8;box-shadow:inset -1px -1px 0 #a0a0a0"></div>
<svg style="position:absolute;left:972px;top:1107px" width="16" height="15"><path d="M6.0 3.5 L10.0 7.5 L6.0 11.5 Z" fill="#000"/></svg>
<div style="left:0px;top:1124px;width:991px;height:18px;background:#f4f4f4"></div>
<div style="left:3px;top:1124px;width:986px;height:15px;background:#d6d2cc;border:1px solid #7a7a7a;border-right-color:#fff;border-bottom-color:#fff;box-shadow:inset 1px 1px 0 #fff"></div>
</body></html>
